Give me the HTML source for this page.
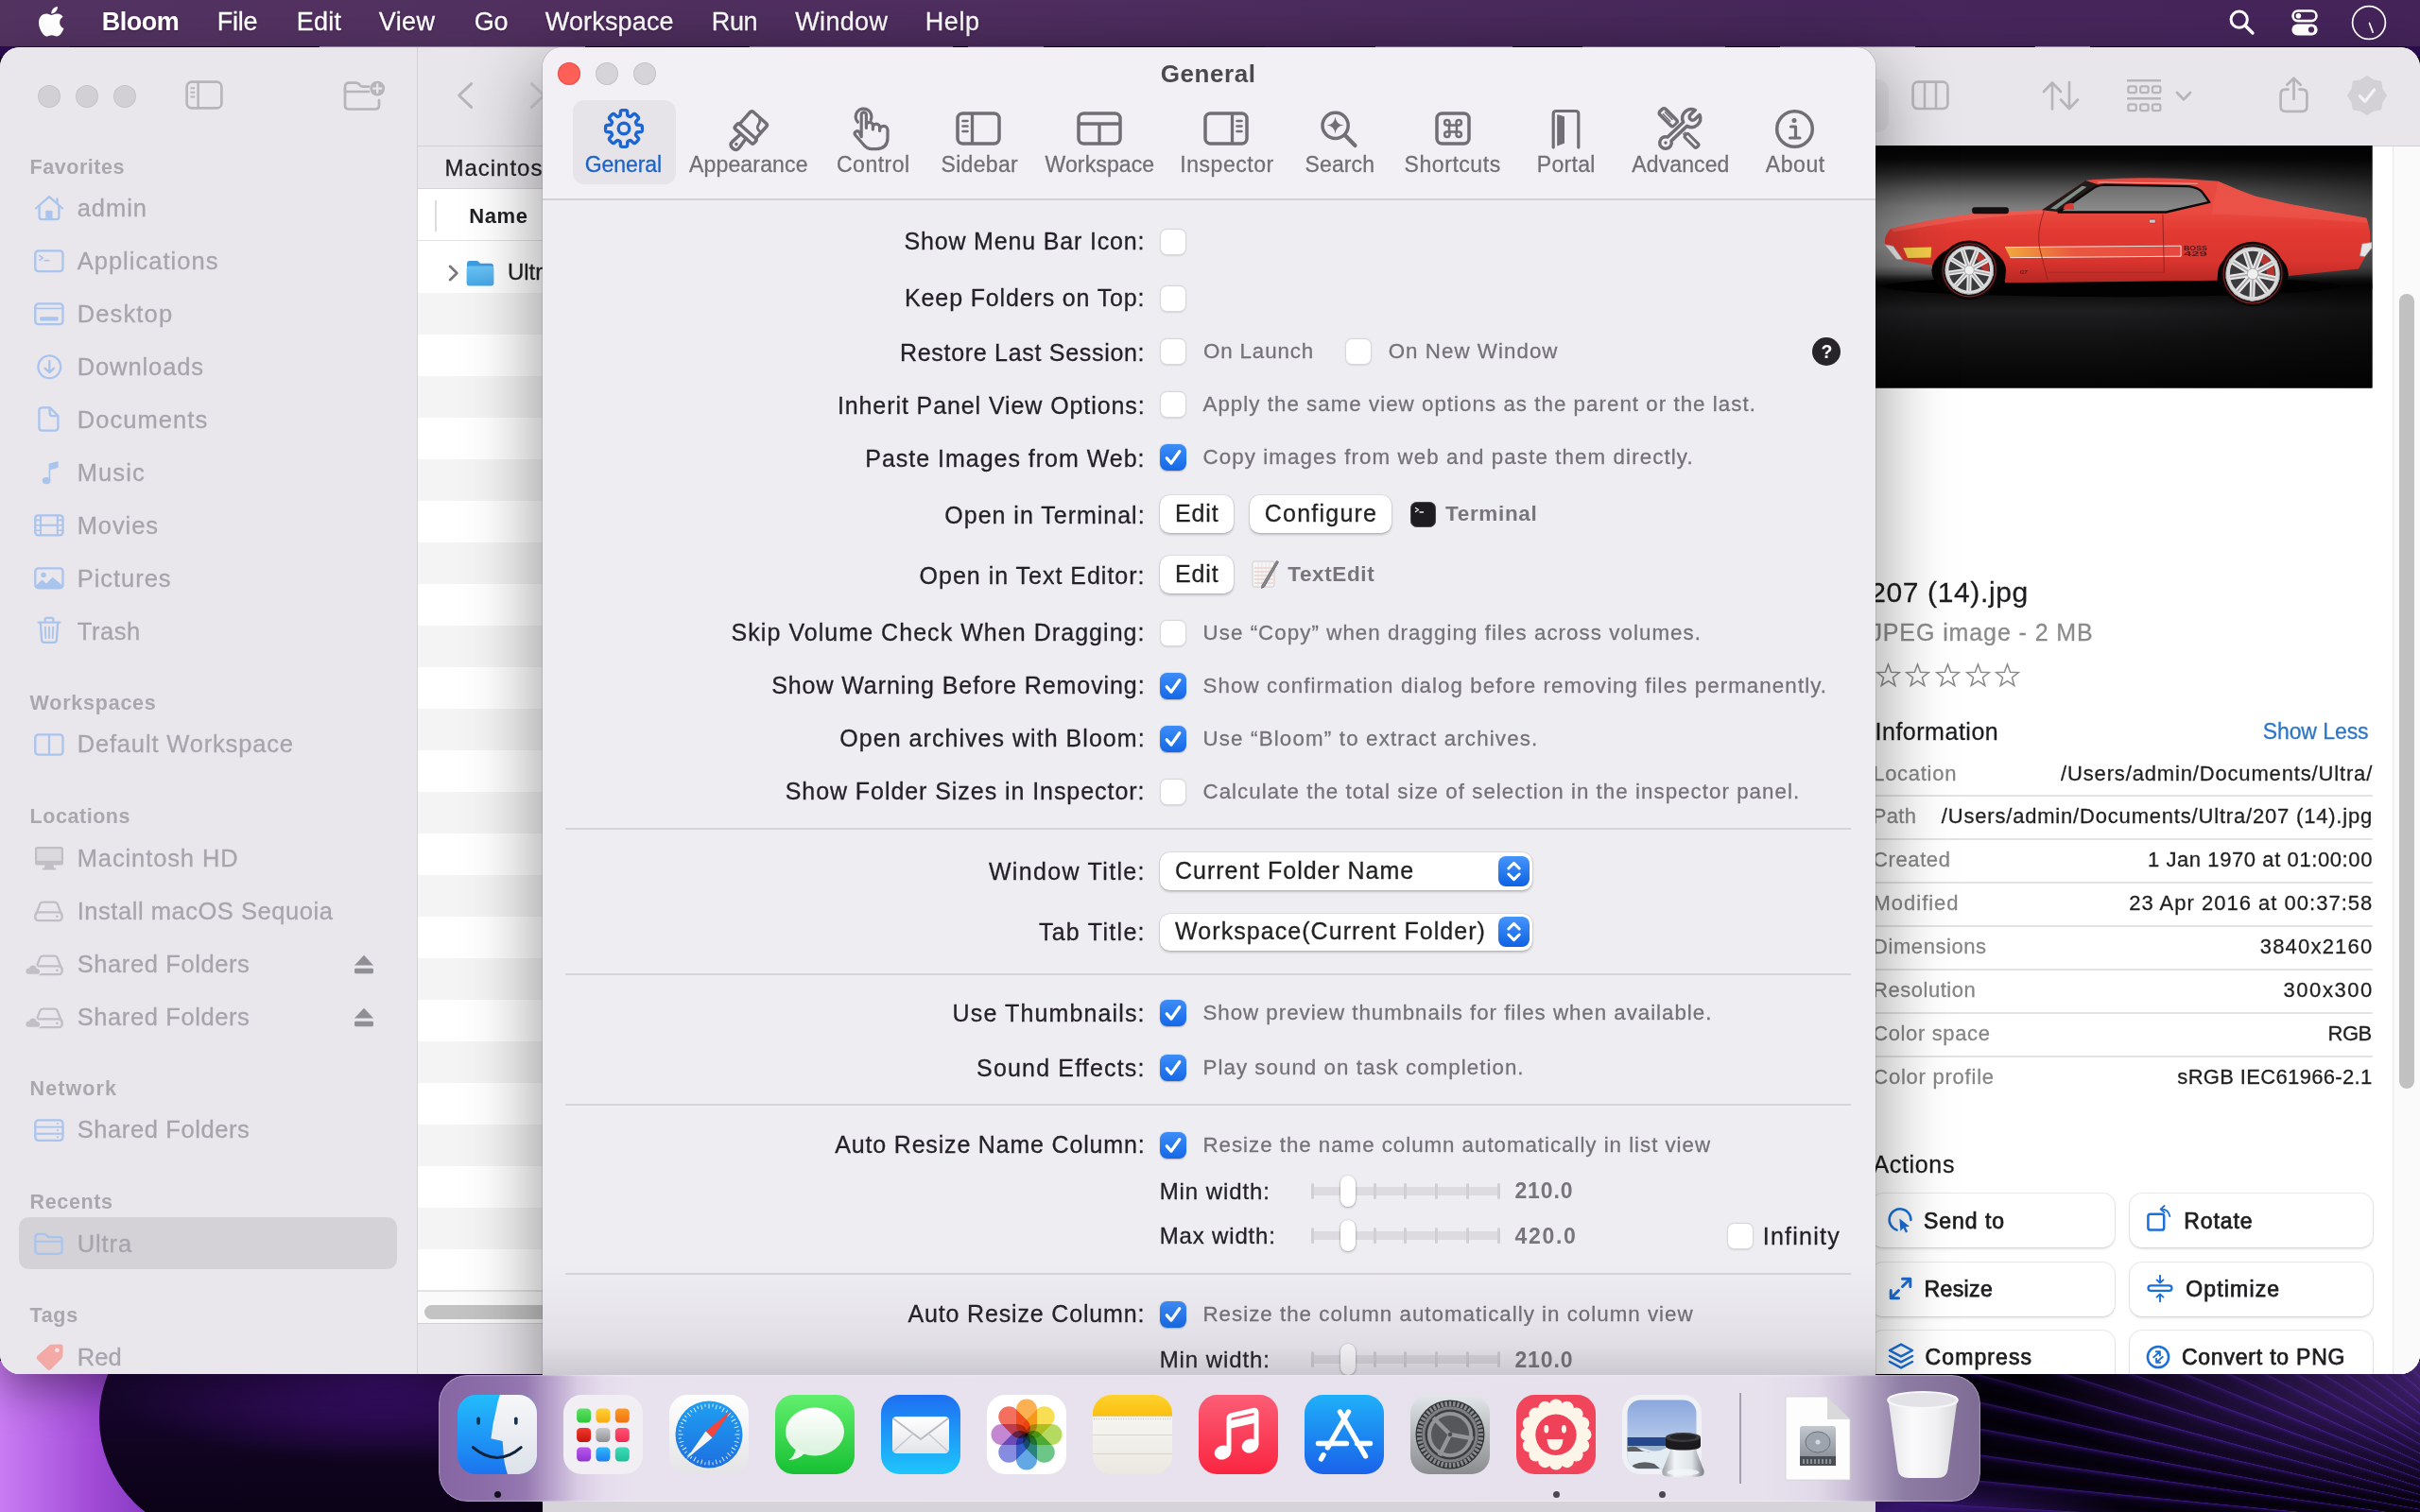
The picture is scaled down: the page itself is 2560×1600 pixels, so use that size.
<!DOCTYPE html>
<html lang="en"><head><meta charset="utf-8"><title>Bloom — General</title>
<style>
*{box-sizing:border-box;margin:0;padding:0}
html,body{width:2560px;height:1600px;overflow:hidden;background:#120722}
body{position:relative;font-family:"Liberation Sans",sans-serif;-webkit-font-smoothing:antialiased}
div,svg,span{position:absolute}
#menubar,#mainwin,#prefs,#dock{will-change:transform}
.t{white-space:pre;line-height:1;font-kerning:normal;-webkit-text-stroke:.28px currentColor}
svg{overflow:visible}
#wall{left:0;top:0;width:2560px;height:1600px;overflow:hidden}
#menubar{left:0;top:0;width:2560px;height:48.5px;background:linear-gradient(90deg,#52325f 0%,#4f2e60 40%,#47275b 75%,#432358 100%)}
#mainwin{left:0;top:50px;width:2560px;height:1404px;border-radius:21px;overflow:hidden;background:#fff;box-shadow:0 18px 45px rgba(0,0,0,.38)}
#prefs{left:574px;top:50px;width:1410px;height:1560px;border-radius:21px 21px 0 0;background:#eeedf2;box-shadow:0 0 0 1px rgba(0,0,0,.10),0 28px 75px 8px rgba(0,0,0,.37);overflow:hidden}
#dock{left:464px;top:1455px;width:1631px;height:134px;border-radius:30px;overflow:hidden}
.cb{width:28px;height:28px;border-radius:7.5px;background:#fff;border:1px solid #d9d6dc;box-shadow:0 .5px 1.5px rgba(0,0,0,.10)}
.cb.on{border:0;background:linear-gradient(#3d8df8,#1568e6);box-shadow:0 .5px 1.5px rgba(0,0,40,.25)}
.btn{background:#fff;border-radius:10.5px;box-shadow:0 0 0 .6px rgba(0,0,0,.10),0 1.2px 2.6px rgba(0,0,0,.20)}
.sep{height:1.6px;background:#d6d3d9}
.abtn{background:#fff;border-radius:13px;box-shadow:0 0 0 1px rgba(0,0,0,.075),0 1.5px 3px rgba(0,0,0,.10)}
.irow{height:1.6px;background:#e2e2e2}
</style></head>
<body>
<div id="wall"><div style="left:0px;top:40px;width:2560px;height:20px;background:linear-gradient(90deg,#2b0c52 0px,#2b0c52 74px,#0a0214 74px,#0a0214 338px,#a57dd3 338px,#a57dd3 619px,#0a0214 619px,#0a0214 793px,#a57dd3 793px,#a57dd3 1008px,#0a0214 1008px,#0a0214 1024px,#a57dd3 1024px,#a57dd3 1104px,#0a0214 1104px,#0a0214 1338px,#241040 1338px,#241040 1455px,#a57dd3 1455px,#a57dd3 1600px,#0a0214 1600px,#0a0214 1674px,#9a70c8 1674px,#9a70c8 1825px,#0a0214 1825px,#0a0214 1883px,#a57dd3 1883px,#a57dd3 2026px,#0a0214 2026px,#0a0214 2153px,#b08adb 2153px,#b08adb 2211px,#0a0214 2211px,#0a0214 2545px,#2b0c52 2545px,#2b0c52 2560px)"></div>
<div style="left:0px;top:1440px;width:600px;height:160px;background:linear-gradient(90deg,#c97cf3 0%,#b866e8 45px,#a04ad6 100px,#8a3cc4 150px)"></div>
<div style="left:105px;top:1376px;width:900px;height:250px;border-radius:125px 0 0 125px;background:radial-gradient(ellipse 300px 85px at 300px 86px,#3d1070 0%,#2d0b54 45%,rgba(22,6,42,0) 100%),linear-gradient(180deg,#1d0838 0%,#1a0733 35%,#100420 65%,#090214 100%)"></div>
<div style="left:1984px;top:1440px;width:576px;height:160px;background:repeating-conic-gradient(from 262deg at 756px 190px,#05010a 0deg,#09021a 1deg,#1c0840 1.36deg,#38187c 1.56deg,#09021a 1.64deg,#05010a 2.4deg)"></div>
<div style="left:1984px;top:1440px;width:576px;height:160px;background:radial-gradient(ellipse 420px 150px at 100% 0%,rgba(140,75,230,.55) 0%,rgba(120,60,210,.25) 55%,rgba(0,0,0,0) 100%),radial-gradient(ellipse 260px 40px at 0% 100%,rgba(75,30,150,.85) 0%,rgba(75,30,150,0) 100%),linear-gradient(90deg,rgba(0,0,0,.35) 0%,rgba(0,0,0,0) 50%)"></div></div>
<div id="menubar"><svg style="left:41px;top:7px;" width="26.5" height="31.5" viewBox="4 32 376 448"><path fill="#fff" d="M318.7 268.7c-.2-36.7 16.4-64.4 50-84.8-18.8-26.9-47.2-41.7-84.7-44.6-35.5-2.8-74.3 20.7-88.5 20.7-15 0-49.4-19.7-76.4-19.7C63.3 141.2 4 184.8 4 273.5q0 39.3 14.4 81.2c12.8 36.7 59 126.7 107.2 125.2 25.2-.6 43-17.9 75.8-17.9 31.8 0 48.3 17.9 76.4 17.9 48.6-.7 90.4-82.5 102.6-119.3-65.2-30.7-61.7-90-61.7-91.9zm-56.6-164.2c27.3-32.4 24.8-61.9 24-72.5-24.1 1.4-52 16.4-67.9 34.9-17.5 19.8-27.8 44.3-25.6 71.9 26.1 2 49.9-11.4 69.5-34.3z"/></svg>
<span class="t" style="left:107.8px;top:9.6px;font-size:27px;color:#fff;font-weight:700;-webkit-text-stroke:0;letter-spacing:-0.51px;text-shadow:0 1px 2.500px rgba(0,0,0,.35);">Bloom</span>
<span class="t" style="left:229.8px;top:9.6px;font-size:27px;color:#fff;letter-spacing:-0.27px;text-shadow:0 1px 2.500px rgba(0,0,0,.35);">File</span>
<span class="t" style="left:313.8px;top:9.6px;font-size:27px;color:#fff;letter-spacing:0.22px;text-shadow:0 1px 2.500px rgba(0,0,0,.35);">Edit</span>
<span class="t" style="left:400.8px;top:9.6px;font-size:27px;color:#fff;letter-spacing:0.35px;text-shadow:0 1px 2.500px rgba(0,0,0,.35);">View</span>
<span class="t" style="left:501.8px;top:9.6px;font-size:27px;color:#fff;letter-spacing:-0.30px;text-shadow:0 1px 2.500px rgba(0,0,0,.35);">Go</span>
<span class="t" style="left:576.8px;top:9.6px;font-size:27px;color:#fff;letter-spacing:0.15px;text-shadow:0 1px 2.500px rgba(0,0,0,.35);">Workspace</span>
<span class="t" style="left:752.8px;top:9.6px;font-size:27px;color:#fff;letter-spacing:-0.37px;text-shadow:0 1px 2.500px rgba(0,0,0,.35);">Run</span>
<span class="t" style="left:841.3px;top:9.6px;font-size:27px;color:#fff;letter-spacing:0.32px;text-shadow:0 1px 2.500px rgba(0,0,0,.35);">Window</span>
<span class="t" style="left:978.8px;top:9.6px;font-size:27px;color:#fff;letter-spacing:0.57px;text-shadow:0 1px 2.500px rgba(0,0,0,.35);">Help</span>
<svg style="left:2358px;top:10px;" width="27" height="28" viewBox="0 0 27 28"><circle cx="10.7" cy="10.7" r="8.6" fill="none" stroke="#fff" stroke-width="3"/><path d="M17 17l8 8" stroke="#fff" stroke-width="3.4" stroke-linecap="round"/></svg>
<svg style="left:2424px;top:10px;" width="28" height="28" viewBox="0 0 28 28"><rect x="1.5" y="1.5" width="25" height="10.6" rx="5.3" fill="none" stroke="#fff" stroke-width="2.6"/><circle cx="7.4" cy="6.8" r="2.8" fill="#fff"/><rect x=".4" y="15.4" width="27.2" height="12" rx="6" fill="#fff"/><circle cx="21" cy="21.4" r="3.1" fill="#48285c"/></svg>
<svg style="left:2487px;top:5px;" width="38" height="38" viewBox="0 0 38 38"><circle cx="19" cy="19" r="17.4" fill="none" stroke="#fff" stroke-width="1.7"/><path d="M19.5 19.5l3.6 9.6" stroke="#fff" stroke-width="1.7" stroke-linecap="round"/></svg></div>
<div id="mainwin"><div style="left:0px;top:-0.5px;width:441px;height:1405px;background:#e9e6ec"></div>
<div style="left:441px;top:-0.5px;width:1.2px;height:1405px;background:#d3d1d6"></div>
<div style="left:40px;top:39.6px;width:24px;height:24px;border-radius:50%;background:#d2d0d5;box-shadow:inset 0 0 0 1px rgba(0,0,0,.06)"></div>
<div style="left:80px;top:39.6px;width:24px;height:24px;border-radius:50%;background:#d2d0d5;box-shadow:inset 0 0 0 1px rgba(0,0,0,.06)"></div>
<div style="left:120px;top:39.6px;width:24px;height:24px;border-radius:50%;background:#d2d0d5;box-shadow:inset 0 0 0 1px rgba(0,0,0,.06)"></div>
<svg style="left:196px;top:35px;" width="40" height="31" viewBox="0 0 40 31"><rect x="1.6" y="1.6" width="36.8" height="27.8" rx="5.2" fill="none" stroke="#b7b5ba" stroke-width="2.6"/><path d="M13.6 2v27" stroke="#b7b5ba" stroke-width="2.4"/><path d="M5.5 8.2h4.6M5.5 12.8h4.6M5.5 17.4h4.6" stroke="#b7b5ba" stroke-width="2" /></svg>
<svg style="left:363px;top:34px;" width="46" height="34" viewBox="0 0 46 34"><path d="M2 9.5v17.8q0 4.2 4.2 4.2h27.6q4.2 0 4.2-4.2V22" fill="none" stroke="#b7b5ba" stroke-width="2.7" stroke-linecap="round"/><path d="M2 12.5V8q0-4.4 4.4-4.4h7.2q2 0 3.2 1.4l1.4 1.6q1 1 2.6 1H27" fill="none" stroke="#b7b5ba" stroke-width="2.7" stroke-linecap="round"/><path d="M2 13h26" stroke="#b7b5ba" stroke-width="2.4"/><circle cx="36.2" cy="9.6" r="7.9" fill="#b7b5ba"/><path d="M36.2 5.4v8.4M32 9.6h8.4" stroke="#e9e6ec" stroke-width="2.2" stroke-linecap="round"/></svg>
<span class="t" style="left:31.6px;top:116.9px;font-size:21.5px;color:#aaa8ae;font-weight:700;-webkit-text-stroke:0;letter-spacing:0.54px;">Favorites</span>
<span class="t" style="left:81.7px;top:157.9px;font-size:25.5px;color:#a7a5ac;letter-spacing:0.97px;">admin</span>
<span class="t" style="left:81.7px;top:213.9px;font-size:25.5px;color:#a7a5ac;letter-spacing:1.02px;">Applications</span>
<span class="t" style="left:81.7px;top:269.9px;font-size:25.5px;color:#a7a5ac;letter-spacing:1.14px;">Desktop</span>
<span class="t" style="left:81.7px;top:325.9px;font-size:25.5px;color:#a7a5ac;letter-spacing:0.90px;">Downloads</span>
<span class="t" style="left:81.7px;top:381.9px;font-size:25.5px;color:#a7a5ac;letter-spacing:1.06px;">Documents</span>
<span class="t" style="left:81.7px;top:437.9px;font-size:25.5px;color:#a7a5ac;letter-spacing:1.10px;">Music</span>
<span class="t" style="left:81.7px;top:493.9px;font-size:25.5px;color:#a7a5ac;letter-spacing:0.90px;">Movies</span>
<span class="t" style="left:81.7px;top:549.9px;font-size:25.5px;color:#a7a5ac;letter-spacing:0.97px;">Pictures</span>
<span class="t" style="left:81.7px;top:605.9px;font-size:25.5px;color:#a7a5ac;letter-spacing:0.57px;">Trash</span>
<span class="t" style="left:31.6px;top:684.0px;font-size:21.5px;color:#aaa8ae;font-weight:700;-webkit-text-stroke:0;letter-spacing:0.77px;">Workspaces</span>
<span class="t" style="left:81.7px;top:724.6px;font-size:25.5px;color:#a7a5ac;letter-spacing:0.83px;">Default Workspace</span>
<span class="t" style="left:31.6px;top:804.3px;font-size:21.5px;color:#aaa8ae;font-weight:700;-webkit-text-stroke:0;letter-spacing:0.54px;">Locations</span>
<span class="t" style="left:81.7px;top:846.3px;font-size:25.5px;color:#a7a5ac;letter-spacing:0.89px;">Macintosh HD</span>
<span class="t" style="left:81.7px;top:902.3px;font-size:25.5px;color:#a7a5ac;letter-spacing:0.54px;">Install macOS Sequoia</span>
<span class="t" style="left:81.7px;top:957.9px;font-size:25.5px;color:#a7a5ac;letter-spacing:0.60px;">Shared Folders</span>
<span class="t" style="left:81.7px;top:1013.9px;font-size:25.5px;color:#a7a5ac;letter-spacing:0.60px;">Shared Folders</span>
<span class="t" style="left:31.6px;top:1092.3px;font-size:21.5px;color:#aaa8ae;font-weight:700;-webkit-text-stroke:0;letter-spacing:1.09px;">Network</span>
<span class="t" style="left:81.7px;top:1133.3px;font-size:25.5px;color:#a7a5ac;letter-spacing:0.60px;">Shared Folders</span>
<span class="t" style="left:31.6px;top:1212.3px;font-size:21.5px;color:#aaa8ae;font-weight:700;-webkit-text-stroke:0;letter-spacing:0.64px;">Recents</span>
<div style="left:20px;top:1238.4px;width:400px;height:55px;border-radius:10.5px;background:#d4d2d7"></div>
<span class="t" style="left:81.7px;top:1253.5px;font-size:25.5px;color:#a7a5ac;letter-spacing:0.89px;">Ultra</span>
<span class="t" style="left:31.6px;top:1332.3px;font-size:21.5px;color:#aaa8ae;font-weight:700;-webkit-text-stroke:0;letter-spacing:0.64px;">Tags</span>
<span class="t" style="left:81.7px;top:1373.7px;font-size:25.5px;color:#a7a5ac;letter-spacing:0.07px;">Red</span>
<svg style="left:36px;top:156px;" width="32" height="28" viewBox="0 0 32 28"><path d="M2 14.5L16 2.2l14 12.3" fill="none" stroke="#a9c4ed" stroke-width="2.3" stroke-linejoin="round" stroke-linecap="round"/><path d="M24.5 4.5v5" fill="none" stroke="#a9c4ed" stroke-width="2.3" stroke-linejoin="round" stroke-linecap="round"/><path d="M5.6 12.5v11q0 2.6 2.6 2.6h15.6q2.6 0 2.6-2.6v-11" fill="none" stroke="#a9c4ed" stroke-width="2.3" stroke-linejoin="round" stroke-linecap="round"/><rect x="12.3" y="16.8" width="7.2" height="9.4" fill="#a9c4ed"/></svg>
<svg style="left:36px;top:214px;" width="32" height="25" viewBox="0 0 32 25"><rect x="1.3" y="1.3" width="29.2" height="21.8" rx="3.4" fill="none" stroke="#a9c4ed" stroke-width="2.3" stroke-linejoin="round" stroke-linecap="round"/><path d="M6 6.6l3.4 2.3L6 11.2M11.2 11.6h4.4" fill="none" stroke="#a9c4ed" stroke-width="1.7" stroke-linecap="round" stroke-linejoin="round"/></svg>
<svg style="left:36px;top:270px;" width="32" height="25" viewBox="0 0 32 25"><rect x="1.3" y="1.3" width="29.2" height="21.8" rx="3.4" fill="none" stroke="#a9c4ed" stroke-width="2.3" stroke-linejoin="round" stroke-linecap="round"/><path d="M1.6 6.4h28.6" stroke="#a9c4ed" stroke-width="1.6"/><rect x="6.2" y="15.2" width="19.4" height="4.2" rx="1.2" fill="#a9c4ed"/></svg>
<svg style="left:39px;top:325px;" width="27" height="27" viewBox="0 0 27 27"><circle cx="13.3" cy="13.3" r="11.9" fill="none" stroke="#a9c4ed" stroke-width="2.3" stroke-linejoin="round" stroke-linecap="round"/><path d="M13.3 6.8v12M8.6 14.6l4.7 4.6 4.7-4.6" fill="none" stroke="#a9c4ed" stroke-width="2.3" stroke-linejoin="round" stroke-linecap="round"/></svg>
<svg style="left:40px;top:380px;" width="24" height="27" viewBox="0 0 24 27"><path d="M1.4 4.4q0-3 3-3h8.4l8.6 8.6v12.6q0 3-3 3H4.4q-3 0-3-3z" fill="none" stroke="#a9c4ed" stroke-width="2.3" stroke-linejoin="round" stroke-linecap="round"/><path d="M12.6 1.6v6q0 2.6 2.6 2.6h6" fill="none" stroke="#a9c4ed" stroke-width="2.3" stroke-linejoin="round" stroke-linecap="round"/></svg>
<svg style="left:44px;top:437px;" width="19" height="27" viewBox="0 0 19 27"><path d="M8.4 21.2V4.2l8.4-2.2v5.2l-8.4 2.2" fill="#a9c4ed" stroke="#a9c4ed" stroke-width="1.6" stroke-linejoin="round"/><ellipse cx="5.1" cy="21.6" rx="4.4" ry="3.7" fill="#a9c4ed"/></svg>
<svg style="left:36px;top:494px;" width="32" height="24" viewBox="0 0 32 24"><rect x="1.3" y="1.3" width="29.2" height="21" rx="3" fill="none" stroke="#a9c4ed" stroke-width="2.3" stroke-linejoin="round" stroke-linecap="round"/><path d="M7 1.6v20.6M24.8 1.6v20.6M7 11.8h17.8" stroke="#a9c4ed" stroke-width="2"/><path d="M1.6 6.4h5.2M1.6 11.8h5.2M1.6 17.2h5.2M25 6.4h5.2M25 11.8h5.2M25 17.2h5.2" stroke="#a9c4ed" stroke-width="1.6"/></svg>
<svg style="left:36px;top:550px;" width="32" height="24" viewBox="0 0 32 24"><rect x="1.3" y="1.3" width="29.2" height="21" rx="3.4" fill="none" stroke="#a9c4ed" stroke-width="2.3" stroke-linejoin="round" stroke-linecap="round"/><circle cx="10" cy="8.4" r="2.7" fill="#a9c4ed"/><path d="M2 19.5l6.5-6 4.6 4 6.6-6.8 10.6 9v1.6q0 1.4-1.6 1.4H3.6q-1.6 0-1.6-1.4z" fill="#a9c4ed"/></svg>
<svg style="left:39px;top:602px;" width="26" height="30" viewBox="0 0 26 30"><path d="M1.6 6.6h22.8M8.6 6.2V3.6q0-1.8 1.8-1.8h5.2q1.8 0 1.8 1.8v2.6" fill="none" stroke="#a9c4ed" stroke-width="2.3" stroke-linejoin="round" stroke-linecap="round"/><path d="M3.8 7l1.3 18.2q.2 2.6 2.8 2.6h10.2q2.6 0 2.8-2.6L22.2 7" fill="none" stroke="#a9c4ed" stroke-width="2.3" stroke-linejoin="round" stroke-linecap="round"/><path d="M8.8 11.4l.5 11.6M13 11.4V23M17.2 11.4l-.5 11.6" stroke="#a9c4ed" stroke-width="1.8" stroke-linecap="round"/></svg>
<svg style="left:36px;top:726px;" width="32" height="25" viewBox="0 0 32 25"><rect x="1.3" y="1.3" width="29.2" height="21.4" rx="3.4" fill="none" stroke="#a9c4ed" stroke-width="2.3" stroke-linejoin="round" stroke-linecap="round"/><path d="M16 1.6v21" stroke="#a9c4ed" stroke-width="2.2"/></svg>
<svg style="left:36px;top:845px;" width="32" height="27" viewBox="0 0 32 27"><rect x="1" y="1" width="30" height="19.6" rx="2.6" fill="#c1bfc5"/><rect x="3.2" y="3.2" width="25.6" height="12.6" fill="#dbd9de"/><path d="M11.6 20h8.8l.8 3.4h2v2.2H8.800v-2.2h2z" fill="#c1bfc5"/></svg>
<svg style="left:36.4px;top:903px;" width="32" height="23" viewBox="0 0 32 23"><path d="M2 14.6L6.2 3.8q.9-2.2 3.2-2.2h12.200q2.300 0 3.200 2.200L29 14.600" fill="none" stroke="#c1bfc5" stroke-width="2.3" stroke-linejoin="round" stroke-linecap="round"/><rect x="1.3" y="12.4" width="28.4" height="8.800" rx="3.400" fill="none" stroke="#c1bfc5" stroke-width="2.3" stroke-linejoin="round" stroke-linecap="round"/><circle cx="24.4" cy="16.8" r="1.300" fill="#c1bfc5"/></svg>
<svg style="left:36.4px;top:959.6px;" width="32" height="23" viewBox="0 0 32 23"><path d="M2 14.6L6.2 3.8q.9-2.2 3.2-2.2h12.200q2.300 0 3.200 2.200L29 14.600" fill="none" stroke="#c1bfc5" stroke-width="2.3" stroke-linejoin="round" stroke-linecap="round"/><rect x="1.3" y="12.4" width="28.4" height="8.800" rx="3.400" fill="none" stroke="#c1bfc5" stroke-width="2.3" stroke-linejoin="round" stroke-linecap="round"/><circle cx="24.4" cy="16.8" r="1.300" fill="#c1bfc5"/><path d="M-6.6 21.6h9.6a3.600 3.600 0 0 0 .4-7.200a4.600 4.600 0 0 0-8.800-.6a4 4 0 0 0-1.200 7.800z" fill="#c1bfc5" stroke="#e9e6ec" stroke-width="1.6"/></svg>
<svg style="left:36.4px;top:1015.6px;" width="32" height="23" viewBox="0 0 32 23"><path d="M2 14.6L6.2 3.8q.9-2.2 3.2-2.2h12.200q2.300 0 3.200 2.200L29 14.600" fill="none" stroke="#c1bfc5" stroke-width="2.3" stroke-linejoin="round" stroke-linecap="round"/><rect x="1.3" y="12.4" width="28.4" height="8.800" rx="3.400" fill="none" stroke="#c1bfc5" stroke-width="2.3" stroke-linejoin="round" stroke-linecap="round"/><circle cx="24.4" cy="16.8" r="1.300" fill="#c1bfc5"/><path d="M-6.6 21.6h9.6a3.600 3.600 0 0 0 .4-7.200a4.600 4.600 0 0 0-8.800-.6a4 4 0 0 0-1.200 7.800z" fill="#c1bfc5" stroke="#e9e6ec" stroke-width="1.6"/></svg>
<svg style="left:36px;top:1134px;" width="32" height="25" viewBox="0 0 32 25"><rect x="1.3" y="1.3" width="29.2" height="21.6" rx="3.6" fill="none" stroke="#a9c4ed" stroke-width="2.3" stroke-linejoin="round" stroke-linecap="round"/><path d="M1.6 8.600h28.600M1.600 15.700h28.600" stroke="#a9c4ed" stroke-width="1.900"/><circle cx="25" cy="5" r="1.100" fill="#a9c4ed"/><circle cx="25" cy="12.1" r="1.100" fill="#a9c4ed"/><circle cx="25" cy="19.300" r="1.100" fill="#a9c4ed"/></svg>
<svg style="left:36px;top:1254px;" width="32" height="25" viewBox="0 0 32 25"><path d="M1.4 19.600V5q0-3.200 3.200-3.200h6q1.600 0 2.600 1.200l1.200 1.400q.8.800 2.200.800h9.800q3.200 0 3.200 3.200v11.200q0 3.200-3.200 3.200H4.600q-3.200 0-3.200-3.200z" fill="none" stroke="#a9c4ed" stroke-width="2.3" stroke-linejoin="round" stroke-linecap="round"/><path d="M1.600 9.800h28" stroke="#a9c4ed" stroke-width="2"/></svg>
<svg style="left:37px;top:1371px;" width="32" height="30" viewBox="0 0 32 30"><path d="M17.600 1.800l9.200-.2q2.800-.1 2.800 2.800l-.2 9.200q0 1.800-1.400 3.200L16.800 28q-2 2-4 0L2.600 17.800q-2-2 0-4L14.400 3.200q1.400-1.400 3.200-1.400z" fill="#f3aaa6"/><circle cx="23.400" cy="7.800" r="2.300" fill="#f9e4e6"/></svg>
<svg style="left:373.6px;top:960px;" width="22" height="21" viewBox="0 0 22 21"><path d="M11 .8L21 11.600H1z" fill="#918f96"/><rect x="1" y="14.800" width="20" height="5.400" rx="1.400" fill="#918f96"/></svg>
<svg style="left:373.6px;top:1016px;" width="22" height="21" viewBox="0 0 22 21"><path d="M11 .8L21 11.600H1z" fill="#918f96"/><rect x="1" y="14.800" width="20" height="5.400" rx="1.400" fill="#918f96"/></svg>
<div style="left:442px;top:-0.5px;width:2118px;height:104.5px;background:#e9e6eb"></div>
<div style="left:442px;top:103.6px;width:2118px;height:1.4px;background:#d2d0d4"></div>
<svg style="left:483px;top:37px;" width="18" height="28" viewBox="0 0 18 28"><path d="M15.6 1.600L2.600 14l13 12.400" fill="none" stroke="#b7b5ba" stroke-width="3" stroke-linecap="round" stroke-linejoin="round"/></svg>
<svg style="left:560px;top:37px;" width="18" height="28" viewBox="0 0 18 28"><path d="M2.400 1.600L15.400 14l-13 12.400" fill="none" stroke="#cfcdd2" stroke-width="3" stroke-linecap="round" stroke-linejoin="round"/></svg>
<div style="left:1940px;top:34px;width:58px;height:56px;border-radius:12px;background:#e0dde3"></div>
<svg style="left:2022px;top:35px;" width="40" height="32" viewBox="0 0 40 32"><rect x="1.600" y="1.600" width="36.800" height="28.400" rx="5.200" fill="none" stroke="#b7b5ba" stroke-width="2.700"/><path d="M14 2v28M26 2v28" stroke="#b7b5ba" stroke-width="2.500"/></svg>
<svg style="left:2160px;top:35px;" width="40" height="33" viewBox="0 0 40 33"><path d="M11 30.500V3M2 12l9-9.500L20 12M29 2v27.500M20 20.500l9 9.500 9-9.500" fill="none" stroke="#b7b5ba" stroke-width="2.700" stroke-linecap="round" stroke-linejoin="round"/></svg>
<svg style="left:2250px;top:34px;" width="36" height="36" viewBox="0 0 36 36"><path d="M0 1.300h36M0 20.200h36" stroke="#b7b5ba" stroke-width="2.400"/><rect x="1.4" y="7.4" width="8.400" height="6.800" rx="1.600" fill="none" stroke="#b7b5ba" stroke-width="2.300"/><rect x="14.2" y="7.4" width="8.400" height="6.800" rx="1.600" fill="none" stroke="#b7b5ba" stroke-width="2.300"/><rect x="27" y="7.4" width="8.400" height="6.800" rx="1.600" fill="none" stroke="#b7b5ba" stroke-width="2.300"/><rect x="1.4" y="26.4" width="8.400" height="6.800" rx="1.600" fill="none" stroke="#b7b5ba" stroke-width="2.300"/><rect x="14.2" y="26.4" width="8.400" height="6.800" rx="1.600" fill="none" stroke="#b7b5ba" stroke-width="2.300"/><rect x="27" y="26.4" width="8.400" height="6.800" rx="1.600" fill="none" stroke="#b7b5ba" stroke-width="2.300"/></svg>
<svg style="left:2301px;top:46px;" width="18" height="12" viewBox="0 0 18 12"><path d="M2 2l7 7.200L16 2" fill="none" stroke="#b7b5ba" stroke-width="2.800" stroke-linecap="round" stroke-linejoin="round"/></svg>
<svg style="left:2411px;top:31px;" width="31" height="39" viewBox="0 0 31 39"><path d="M9.600 13.600H6.600q-5 0-5 5v13.200q0 5 5 5h17.800q5 0 5-5V18.600q0-5-5-5h-3" fill="none" stroke="#b7b5ba" stroke-width="2.700" stroke-linecap="round"/><path d="M15.500 24V2.400M8.400 8.800l7.100-7 7.100 7" fill="none" stroke="#b7b5ba" stroke-width="2.700" stroke-linecap="round" stroke-linejoin="round"/></svg>
<svg style="left:2484px;top:31px;" width="40" height="40" viewBox="0 0 40 40"><polygon points="20.0,0.4 26.3,4.8 33.9,6.1 35.2,13.7 39.6,20.0 35.2,26.3 33.9,33.9 26.3,35.2 20.0,39.6 13.7,35.2 6.1,33.9 4.8,26.3 0.4,20.0 4.8,13.7 6.1,6.1 13.7,4.8" fill="#d3d1d6" stroke="#d3d1d6" stroke-width="3" stroke-linejoin="round"/><path d="M12.400 20.600l5.400 5.800 9.800-12.400" fill="none" stroke="#f4f2f6" stroke-width="3.200" stroke-linecap="round" stroke-linejoin="round"/></svg>
<div style="left:442px;top:105px;width:1542px;height:44px;background:#e9e7eb"></div>
<div style="left:442px;top:148.6px;width:1542px;height:1.4px;background:#d6d5d7"></div>
<span class="t" style="left:470.4px;top:115.9px;font-size:24px;color:#232225;letter-spacing:1.00px;">Macintosh HD</span>
<div style="left:442px;top:150px;width:1542px;height:54px;background:#fff"></div>
<div style="left:442px;top:203.5px;width:1542px;height:1.3px;background:#e3e3e4"></div>
<div style="left:460.3px;top:162px;width:1.3px;height:33px;background:#dcdcdc"></div>
<span class="t" style="left:496.3px;top:167.6px;font-size:22px;color:#222124;font-weight:700;-webkit-text-stroke:0;letter-spacing:0.56px;">Name</span>
<div style="left:442px;top:205px;width:1542px;height:1111px;background:repeating-linear-gradient(180deg,#f4f4f5 0,#f4f4f5 44px,#fff 44px,#fff 88px);background-position:0 55px"></div>
<div style="left:442px;top:205px;width:1542px;height:55px;background:#fff"></div>
<svg style="left:474px;top:230px;" width="12" height="18" viewBox="0 0 12 18"><path d="M2 1.800L9.400 9 2 16.200" fill="none" stroke="#77757a" stroke-width="2.600" stroke-linecap="round" stroke-linejoin="round"/></svg>
<svg style="left:493px;top:224.5px;" width="30" height="28" viewBox="0 0 30 28"><defs><linearGradient id="fg" x1="0" y1="0" x2="0" y2="1"><stop offset="0" stop-color="#6cc4f5"/><stop offset="1" stop-color="#45a6e6"/></linearGradient></defs><path d="M1 4q0-3 3-3h6.800q1.600 0 2.600 1.100L15 3.800h11q3 0 3 3V10H1z" fill="#3d9ddf"/><rect x=".6" y="6.400" width="28.800" height="21" rx="3" fill="url(#fg)"/></svg>
<span class="t" style="left:536.9px;top:226.1px;font-size:24px;color:#232225;">Ultra</span>
<div style="left:442px;top:1316px;width:1542px;height:35px;background:#fafafa"></div>
<div style="left:442px;top:1315.4px;width:1542px;height:1.2px;background:#e4e4e4"></div>
<div style="left:448.5px;top:1331px;width:700px;height:15px;border-radius:8px;background:#c3c3c3"></div>
<div style="left:442px;top:1350.4px;width:1542px;height:54px;background:#e9e6eb"></div>
<div style="left:442px;top:1350px;width:1542px;height:1.3px;background:#d2d0d4"></div>
<div style="left:1960px;top:105px;width:600px;height:1300px;background:#fff"></div>
<div style="left:2531px;top:105px;width:29px;height:1300px;background:#fafafa"></div>
<div style="left:2530.6px;top:105px;width:1.3px;height:1300px;background:#e7e7e7"></div>
<div style="left:2538px;top:260.5px;width:16px;height:841px;border-radius:8px;background:#c1c1c1"></div>
<span class="t" style="left:1978.2px;top:561.8px;font-size:30px;color:#1d1d1f;letter-spacing:0.63px;">207 (14).jpg</span>
<span class="t" style="left:1978.4px;top:607.0px;font-size:25px;color:#8b8b8b;letter-spacing:0.90px;">JPEG image - 2 MB</span>
<svg style="left:1984.5px;top:651.5px;" width="25" height="25" viewBox="0 0 25 25"><polygon points="12.50,1.00 15.56,9.19 24.29,9.57 17.45,15.01 19.79,23.43 12.50,18.60 5.21,23.43 7.55,15.01 0.71,9.57 9.44,9.19" fill="none" stroke="#8b8b8b" stroke-width="1.500" stroke-linejoin="miter"/></svg>
<svg style="left:2016.2px;top:651.5px;" width="25" height="25" viewBox="0 0 25 25"><polygon points="12.50,1.00 15.56,9.19 24.29,9.57 17.45,15.01 19.79,23.43 12.50,18.60 5.21,23.43 7.55,15.01 0.71,9.57 9.44,9.19" fill="none" stroke="#8b8b8b" stroke-width="1.500" stroke-linejoin="miter"/></svg>
<svg style="left:2047.9px;top:651.5px;" width="25" height="25" viewBox="0 0 25 25"><polygon points="12.50,1.00 15.56,9.19 24.29,9.57 17.45,15.01 19.79,23.43 12.50,18.60 5.21,23.43 7.55,15.01 0.71,9.57 9.44,9.19" fill="none" stroke="#8b8b8b" stroke-width="1.500" stroke-linejoin="miter"/></svg>
<svg style="left:2079.6px;top:651.5px;" width="25" height="25" viewBox="0 0 25 25"><polygon points="12.50,1.00 15.56,9.19 24.29,9.57 17.45,15.01 19.79,23.43 12.50,18.60 5.21,23.43 7.55,15.01 0.71,9.57 9.44,9.19" fill="none" stroke="#8b8b8b" stroke-width="1.500" stroke-linejoin="miter"/></svg>
<svg style="left:2111.3px;top:651.5px;" width="25" height="25" viewBox="0 0 25 25"><polygon points="12.50,1.00 15.56,9.19 24.29,9.57 17.45,15.01 19.79,23.43 12.50,18.60 5.21,23.43 7.55,15.01 0.71,9.57 9.44,9.19" fill="none" stroke="#8b8b8b" stroke-width="1.500" stroke-linejoin="miter"/></svg>
<span class="t" style="left:1983.5px;top:711.5px;font-size:25px;color:#1d1d1f;letter-spacing:0.52px;">Information</span>
<span class="t" style="left:2393.7px;top:713.0px;font-size:23px;color:#2b76c9;letter-spacing:-0.08px;">Show Less</span>
<span class="t" style="left:1981.2px;top:757.7px;font-size:22px;color:#868686;letter-spacing:0.72px;">Location</span>
<span class="t" style="left:2180.1px;top:757.7px;font-size:22px;color:#1f1f1f;letter-spacing:0.84px;">/Users/admin/Documents/Ultra/</span>
<div style="left:1975px;top:791.2px;width:535px;height:1.6px;background:#e3e3e3"></div>
<span class="t" style="left:1980.8px;top:803.4px;font-size:22px;color:#868686;letter-spacing:0.30px;">Path</span>
<span class="t" style="left:2053.8px;top:803.4px;font-size:22px;color:#1f1f1f;letter-spacing:0.81px;">/Users/admin/Documents/Ultra/207 (14).jpg</span>
<div style="left:1975px;top:837.2px;width:535px;height:1.6px;background:#e3e3e3"></div>
<span class="t" style="left:1981.1px;top:849.0px;font-size:22px;color:#868686;letter-spacing:0.59px;">Created</span>
<span class="t" style="left:2271.9px;top:849.0px;font-size:22px;color:#1f1f1f;letter-spacing:0.59px;">1 Jan 1970 at 01:00:00</span>
<div style="left:1975px;top:883.2px;width:535px;height:1.6px;background:#e3e3e3"></div>
<span class="t" style="left:1981.5px;top:895.1px;font-size:22px;color:#868686;letter-spacing:0.99px;">Modified</span>
<span class="t" style="left:2252.2px;top:895.1px;font-size:22px;color:#1f1f1f;letter-spacing:1.01px;">23 Apr 2016 at 00:37:58</span>
<div style="left:1975px;top:929.2px;width:535px;height:1.6px;background:#e3e3e3"></div>
<span class="t" style="left:1981.1px;top:941.1px;font-size:22px;color:#868686;letter-spacing:0.55px;">Dimensions</span>
<span class="t" style="left:2390.7px;top:941.1px;font-size:22px;color:#1f1f1f;letter-spacing:1.21px;">3840x2160</span>
<div style="left:1975px;top:975.2px;width:535px;height:1.6px;background:#e3e3e3"></div>
<span class="t" style="left:1981.0px;top:987.0px;font-size:22px;color:#868686;letter-spacing:0.53px;">Resolution</span>
<span class="t" style="left:2415.5px;top:987.0px;font-size:22px;color:#1f1f1f;letter-spacing:1.57px;">300x300</span>
<div style="left:1975px;top:1021.2px;width:535px;height:1.6px;background:#e3e3e3"></div>
<span class="t" style="left:1981.2px;top:1032.9px;font-size:22px;color:#868686;letter-spacing:0.64px;">Color space</span>
<span class="t" style="left:2462.6px;top:1032.9px;font-size:22px;color:#1f1f1f;letter-spacing:-0.50px;">RGB</span>
<div style="left:1975px;top:1067.2px;width:535px;height:1.6px;background:#e3e3e3"></div>
<span class="t" style="left:1981.3px;top:1078.8px;font-size:22px;color:#868686;letter-spacing:0.76px;">Color profile</span>
<span class="t" style="left:2303.3px;top:1078.8px;font-size:22px;color:#1f1f1f;letter-spacing:0.34px;">sRGB IEC61966-2.1</span>
<span class="t" style="left:1981.4px;top:1170.3px;font-size:25px;color:#1d1d1f;letter-spacing:0.68px;">Actions</span>
<div class="abtn" style="left:1979px;top:1213.3px;width:257.5px;height:57px;"></div>
<div class="abtn" style="left:2252.5px;top:1213.3px;width:257.2px;height:57px;"></div>
<div class="abtn" style="left:1979px;top:1285.8px;width:257.5px;height:57px;"></div>
<div class="abtn" style="left:2252.5px;top:1285.8px;width:257.2px;height:57px;"></div>
<div class="abtn" style="left:1979px;top:1358px;width:257.5px;height:57px;"></div>
<div class="abtn" style="left:2252.5px;top:1358px;width:257.2px;height:57px;"></div>
<span class="t" style="left:2035.0px;top:1230.8px;font-size:23px;color:#1d1d1f;letter-spacing:0.97px;-webkit-text-stroke:.75px currentColor;">Send to</span>
<span class="t" style="left:2310.3px;top:1230.8px;font-size:23px;color:#1d1d1f;letter-spacing:0.92px;-webkit-text-stroke:.75px currentColor;">Rotate</span>
<span class="t" style="left:2035.6px;top:1303.2px;font-size:23px;color:#1d1d1f;letter-spacing:0.36px;-webkit-text-stroke:.75px currentColor;">Resize</span>
<span class="t" style="left:2312.3px;top:1303.2px;font-size:23px;color:#1d1d1f;letter-spacing:1.15px;-webkit-text-stroke:.75px currentColor;">Optimize</span>
<span class="t" style="left:2036.6px;top:1374.7px;font-size:23px;color:#1d1d1f;letter-spacing:1.08px;-webkit-text-stroke:.75px currentColor;">Compress</span>
<span class="t" style="left:2307.9px;top:1374.7px;font-size:23px;color:#1d1d1f;letter-spacing:0.79px;-webkit-text-stroke:.75px currentColor;">Convert to PNG</span>
<svg style="left:1997px;top:1228px;" width="27" height="27" viewBox="0 0 27 27"><path d="M9.600 23.600A11.400 11.400 0 1 1 24.400 13" fill="none" stroke="#1a6fd8" stroke-width="2.500" stroke-linecap="round" stroke-linejoin="round"/><path d="M12.400 11.600l1 13.200 3-3.400 2.600 5 2.200-1.200-2.600-4.800 4.400-.6z" fill="#1a6fd8"/></svg>
<svg style="left:2271px;top:1225px;" width="27" height="29" viewBox="0 0 27 29"><rect x="1.400" y="9.800" width="16.800" height="16.800" rx="2.400" fill="none" stroke="#1a6fd8" stroke-width="2.500" stroke-linecap="round" stroke-linejoin="round"/><path d="M15.600 4.600q7.400 0 8.800 7.600" fill="none" stroke="#1a6fd8" stroke-width="1.800" stroke-linecap="round"/><path d="M18.600 1l-4 3.600 4 3.600" fill="none" stroke="#1a6fd8" stroke-width="1.800" stroke-linecap="round" stroke-linejoin="round"/></svg>
<svg style="left:1998px;top:1301px;" width="25" height="25" viewBox="0 0 25 25"><path d="M14.500 2.200h8.300v8.300M22.300 2.700l-7.800 7.800M10.500 22.800H2.200v-8.300M2.700 22.300l7.800-7.800" fill="none" stroke="#1a6fd8" stroke-width="3" stroke-linecap="round" stroke-linejoin="round"/></svg>
<svg style="left:2271px;top:1297.8px;" width="28" height="30" viewBox="0 0 28 30"><rect x="1.500" y="12.300" width="25" height="5.600" rx="2.800" fill="none" stroke="#1a6fd8" stroke-width="2.200"/><path d="M14 1.800v7.600M10.600 6.400l3.400 3.200 3.400-3.200M14 29.200v-7.600M10.600 24.600l3.400-3.200 3.400 3.200" fill="none" stroke="#1a6fd8" stroke-width="1.900" stroke-linecap="round" stroke-linejoin="round"/></svg>
<svg style="left:1997px;top:1371px;" width="28" height="29" viewBox="0 0 28 29"><path d="M14 1.600L26 8 14 14.400 2 8z" fill="none" stroke="#1a6fd8" stroke-width="2.500" stroke-linecap="round" stroke-linejoin="round"/><path d="M2 14l12 6.400L26 14M2 20l12 6.400L26 20" fill="none" stroke="#1a6fd8" stroke-width="2.500" stroke-linecap="round" stroke-linejoin="round"/></svg>
<svg style="left:2270px;top:1372.8px;" width="26" height="26" viewBox="0 0 26 26"><circle cx="13" cy="13" r="11.100" fill="none" stroke="#1a6fd8" stroke-width="2.500" stroke-linecap="round" stroke-linejoin="round"/><path d="M8.200 13.200l6.400-5.600M10.800 7.300h4.100v4.100M17.800 12.800l-6.400 5.600M15.200 18.700h-4.100v-4.100" fill="none" stroke="#1a6fd8" stroke-width="1.900" stroke-linecap="round" stroke-linejoin="round"/></svg>
<svg style="left:1984.3px;top:104.3px;overflow:hidden" width="525.4" height="256.5" viewBox="18 18 2192 1070">
<defs>
<linearGradient id="cglow" x1="0" y1="18" x2="0" y2="650" gradientUnits="userSpaceOnUse"><stop offset="0" stop-color="#020202"/><stop offset=".1" stop-color="#090909"/><stop offset=".2" stop-color="#292929"/><stop offset=".31" stop-color="#575757"/><stop offset=".43" stop-color="#7d7d7d"/><stop offset=".56" stop-color="#8f8f8f"/><stop offset=".7" stop-color="#929292"/><stop offset=".84" stop-color="#7a7a7a"/><stop offset=".94" stop-color="#2c2c2c"/><stop offset="1" stop-color="#050505"/></linearGradient>
<linearGradient id="cfloor" x1="0" y1="0" x2="0" y2="1"><stop offset="0" stop-color="#050505" stop-opacity="0"/><stop offset=".53" stop-color="#050505" stop-opacity="0"/><stop offset=".58" stop-color="#060606"/><stop offset=".68" stop-color="#1f1f21"/><stop offset=".8" stop-color="#121213"/><stop offset="1" stop-color="#040404"/></linearGradient>
<linearGradient id="cedge" x1="0" y1="0" x2="1" y2="0"><stop offset="0" stop-color="#000" stop-opacity="0"/><stop offset=".45" stop-color="#000" stop-opacity="0"/><stop offset=".8" stop-color="#000" stop-opacity=".3"/><stop offset="1" stop-color="#000" stop-opacity=".48"/></linearGradient>
<linearGradient id="cbody" x1="0" y1="170" x2="0" y2="620" gradientUnits="userSpaceOnUse"><stop offset="0" stop-color="#e4483f"/><stop offset=".3" stop-color="#ea4a40"/><stop offset=".5" stop-color="#e23a32"/><stop offset=".8" stop-color="#d9342e"/><stop offset="1" stop-color="#b92823"/></linearGradient>
<linearGradient id="cstripe" x1="140" y1="0" x2="1365" y2="0" gradientUnits="userSpaceOnUse"><stop offset="0" stop-color="#f4d04a"/><stop offset=".12" stop-color="#f2c945"/><stop offset=".38" stop-color="#f1a53c"/><stop offset=".62" stop-color="#e9573f"/><stop offset="1" stop-color="#e8473f"/></linearGradient>
<linearGradient id="cwin" x1="0" y1="190" x2="0" y2="315" gradientUnits="userSpaceOnUse"><stop offset="0" stop-color="#6d6d6d"/><stop offset="1" stop-color="#8e8e8e"/></linearGradient>
</defs>
<rect x="18" y="18" width="2192" height="1070" fill="#030303"/>
<rect x="18" y="18" width="2192" height="632" fill="url(#cglow)"/>
<rect x="18" y="18" width="2192" height="1070" fill="url(#cfloor)"/>
<rect x="18" y="18" width="2192" height="1070" fill="url(#cedge)"/>
<ellipse cx="1060" cy="640" rx="1010" ry="46" fill="#020202"/>
<path d="M130 522 L60 458 Q52 420 85 385 Q250 345 450 318 Q600 305 752 303 L945 172 Q1200 148 1530 175 Q1620 215 1700 243 Q1850 280 2000 305 L2185 338 Q2206 400 2200 440 L2196 478 L2150 562 L1841 594 A157 116 0 1 0 1527 604 L1527 614 L590 624 L588 612 A165 114 0 1 0 269 548 Z" fill="url(#cbody)"/>
<path d="M85 385 Q250 345 450 318 Q600 305 752 303 L760 318 Q500 325 100 400Z" fill="#f0675c" opacity=".55"/>
<path d="M1530 175 Q1620 215 1700 243 Q1850 280 2000 305 L2185 338 L2190 360 Q1800 330 1500 320Z" fill="#ee5a50" opacity=".5"/>
<path d="M752 303 L945 172 L1000 190 L838 312Z" fill="#231a1a"/>
<path d="M790 296 L930 196 L950 200 L815 300Z" fill="#9fb5ae" opacity=".75"/>
<path d="M985 203 Q1000 192 1030 191 L1400 198 Q1445 204 1462 226 L1492 268 L1300 312 L826 312Z" fill="url(#cwin)" stroke="#0d0a0a" stroke-width="10" stroke-linejoin="round"/>
<path d="M1000 180 L1440 186" stroke="#f2d5d2" stroke-width="4" opacity=".7"/>
<path d="M845 298 q10 -28 45 -26 l5 30z" fill="#d93a33"/>
<rect x="444" y="290" width="162" height="29" rx="12" fill="#141012"/>
<path d="M140 470 L265 466 L262 512 L160 514Z" fill="#f3cd49"/>
<path d="M590 468 L1365 462 L1365 506 L612 512Z" fill="url(#cstripe)"/>
<path d="M590 467 L1366 461 L1366 507 L612 513" fill="none" stroke="#f6e9e4" stroke-width="4"/>
<path d="M762 306 Q728 400 742 470 L778 612" fill="none" stroke="#8e1f1c" stroke-width="3.500"/>
<path d="M1286 322 L1292 578" fill="none" stroke="#8e1f1c" stroke-width="3.500"/>
<path d="M780 578 L1292 578" fill="none" stroke="#a32622" stroke-width="3"/>
<text x="1378" y="480" font-family="Liberation Sans,sans-serif" font-weight="700" font-size="29" fill="#5b1616" textLength="104" lengthAdjust="spacingAndGlyphs">BOSS</text>
<text x="1378" y="507" font-family="Liberation Sans,sans-serif" font-weight="700" font-size="29" fill="#5b1616" textLength="104" lengthAdjust="spacingAndGlyphs">429</text>
<text x="655" y="585" font-family="Liberation Sans,sans-serif" font-weight="700" font-style="italic" font-size="24" fill="#6a1a18">GT</text>
<path d="M58 455 L96 462 L138 522 L112 520Z" fill="#e9e9ea" stroke="#a8a8aa" stroke-width="3"/>
<path d="M2166 452 L2208 446 L2208 470 L2178 508 L2156 505Z" fill="#e4e4e6" stroke="#9d9d9f" stroke-width="3"/>
<rect x="1226" y="344" width="28" height="16" rx="3" fill="#c9c9cb" stroke="#7a2020" stroke-width="2"/>
<ellipse cx="430" cy="570" rx="164" ry="113" fill="#070404"/><ellipse cx="1684" cy="587" rx="156" ry="115" fill="#070404"/>
<circle cx="432" cy="568" r="131" fill="#0a0606"/><circle cx="432" cy="568" r="126" fill="#120c0c"/><circle cx="432" cy="568" r="117" fill="none" stroke="#7a2426" stroke-width="5"/><circle cx="432" cy="568" r="106" fill="#3b3a3c"/><path d="M464 485 A89 89 0 0 1 517 587 L487 581 A58 58 0 0 0 453 515Z" fill="#b5342f"/><path d="M449 571L528 587" stroke="#e9e9ea" stroke-width="21" stroke-linecap="round"/><path d="M449 571L528 587" stroke="#a9a9ab" stroke-width="6"/><path d="M443 581L493 644" stroke="#e9e9ea" stroke-width="21" stroke-linecap="round"/><path d="M443 581L493 644" stroke="#a9a9ab" stroke-width="6"/><path d="M432 585L430 665" stroke="#e9e9ea" stroke-width="21" stroke-linecap="round"/><path d="M432 585L430 665" stroke="#a9a9ab" stroke-width="6"/><path d="M421 581L367 641" stroke="#e9e9ea" stroke-width="21" stroke-linecap="round"/><path d="M421 581L367 641" stroke="#a9a9ab" stroke-width="6"/><path d="M415 571L336 582" stroke="#e9e9ea" stroke-width="21" stroke-linecap="round"/><path d="M415 571L336 582" stroke="#a9a9ab" stroke-width="6"/><path d="M418 559L349 517" stroke="#e9e9ea" stroke-width="21" stroke-linecap="round"/><path d="M418 559L349 517" stroke="#a9a9ab" stroke-width="6"/><path d="M427 552L401 476" stroke="#e9e9ea" stroke-width="21" stroke-linecap="round"/><path d="M427 552L401 476" stroke="#a9a9ab" stroke-width="6"/><path d="M438 552L468 477" stroke="#e9e9ea" stroke-width="21" stroke-linecap="round"/><path d="M438 552L468 477" stroke="#a9a9ab" stroke-width="6"/><path d="M447 560L518 521" stroke="#e9e9ea" stroke-width="21" stroke-linecap="round"/><path d="M447 560L518 521" stroke="#a9a9ab" stroke-width="6"/><circle cx="432" cy="568" r="99" fill="none" stroke="#d9d9da" stroke-width="16"/><circle cx="432" cy="568" r="106" fill="none" stroke="#9c9c9e" stroke-width="3"/><circle cx="432" cy="568" r="21" fill="#f0f0f0" stroke="#9a9a9c" stroke-width="3"/>
<circle cx="1683" cy="585" r="143" fill="#0a0606"/><circle cx="1683" cy="585" r="138" fill="#120c0c"/><circle cx="1683" cy="585" r="129" fill="none" stroke="#7a2426" stroke-width="5"/><circle cx="1683" cy="585" r="118" fill="#3b3a3c"/><path d="M1718 493 A99 99 0 0 1 1777 606 L1744 599 A65 65 0 0 0 1707 526Z" fill="#b5342f"/><path d="M1702 589L1789 607" stroke="#e9e9ea" stroke-width="24" stroke-linecap="round"/><path d="M1702 589L1789 607" stroke="#a9a9ab" stroke-width="7"/><path d="M1695 600L1751 670" stroke="#e9e9ea" stroke-width="24" stroke-linecap="round"/><path d="M1695 600L1751 670" stroke="#a9a9ab" stroke-width="7"/><path d="M1683 604L1680 694" stroke="#e9e9ea" stroke-width="24" stroke-linecap="round"/><path d="M1683 604L1680 694" stroke="#a9a9ab" stroke-width="7"/><path d="M1670 599L1611 666" stroke="#e9e9ea" stroke-width="24" stroke-linecap="round"/><path d="M1670 599L1611 666" stroke="#a9a9ab" stroke-width="7"/><path d="M1664 588L1576 601" stroke="#e9e9ea" stroke-width="24" stroke-linecap="round"/><path d="M1664 588L1576 601" stroke="#a9a9ab" stroke-width="7"/><path d="M1667 575L1590 528" stroke="#e9e9ea" stroke-width="24" stroke-linecap="round"/><path d="M1667 575L1590 528" stroke="#a9a9ab" stroke-width="7"/><path d="M1677 567L1648 482" stroke="#e9e9ea" stroke-width="24" stroke-linecap="round"/><path d="M1677 567L1648 482" stroke="#a9a9ab" stroke-width="7"/><path d="M1690 567L1723 484" stroke="#e9e9ea" stroke-width="24" stroke-linecap="round"/><path d="M1690 567L1723 484" stroke="#a9a9ab" stroke-width="7"/><path d="M1700 576L1778 533" stroke="#e9e9ea" stroke-width="24" stroke-linecap="round"/><path d="M1700 576L1778 533" stroke="#a9a9ab" stroke-width="7"/><circle cx="1683" cy="585" r="110" fill="none" stroke="#d9d9da" stroke-width="18"/><circle cx="1683" cy="585" r="118" fill="none" stroke="#9c9c9e" stroke-width="3"/><circle cx="1683" cy="585" r="24" fill="#f0f0f0" stroke="#9a9a9c" stroke-width="3"/>
</svg></div>
<div id="prefs"><div style="left:0px;top:0px;width:1410px;height:161px;background:#f3f0f5"></div>
<div style="left:0px;top:160px;width:1410px;height:1.5px;background:#d3d0d6"></div>
<div style="left:15.8px;top:15.8px;width:24px;height:24px;border-radius:50%;background:#fe5f57;box-shadow:inset 0 0 0 1px rgba(190,40,30,.35)"></div>
<div style="left:55.7px;top:15.8px;width:24px;height:24px;border-radius:50%;background:#d6d4d9;box-shadow:inset 0 0 0 1px rgba(0,0,0,.09)"></div>
<div style="left:95.7px;top:15.8px;width:24px;height:24px;border-radius:50%;background:#d6d4d9;box-shadow:inset 0 0 0 1px rgba(0,0,0,.09)"></div>
<span class="t" style="left:653.8px;top:14.7px;font-size:26px;color:#4b484e;font-weight:700;-webkit-text-stroke:0;letter-spacing:0.56px;">General</span>
<div style="left:31.5px;top:56px;width:109.3px;height:88.8px;border-radius:12px;background:#e6e3e9"></div>
<span class="t" style="left:44.8px;top:113.3px;font-size:23px;color:#1b63c8;letter-spacing:-0.08px;">General</span>
<span class="t" style="left:155.0px;top:113.3px;font-size:23px;color:#716e75;letter-spacing:0.16px;">Appearance</span>
<span class="t" style="left:311.0px;top:113.3px;font-size:23px;color:#716e75;letter-spacing:0.50px;">Control</span>
<span class="t" style="left:421.5px;top:113.3px;font-size:23px;color:#716e75;letter-spacing:0.31px;">Sidebar</span>
<span class="t" style="left:531.5px;top:113.3px;font-size:23px;color:#716e75;letter-spacing:0.13px;">Workspace</span>
<span class="t" style="left:674.3px;top:113.3px;font-size:23px;color:#716e75;letter-spacing:0.54px;">Inspector</span>
<span class="t" style="left:806.6px;top:113.3px;font-size:23px;color:#716e75;letter-spacing:0.10px;">Search</span>
<span class="t" style="left:911.6px;top:113.3px;font-size:23px;color:#716e75;letter-spacing:0.55px;">Shortcuts</span>
<span class="t" style="left:1051.8px;top:113.3px;font-size:23px;color:#716e75;letter-spacing:0.30px;">Portal</span>
<span class="t" style="left:1152.3px;top:113.3px;font-size:23px;color:#716e75;letter-spacing:0.11px;">Advanced</span>
<span class="t" style="left:1293.8px;top:113.3px;font-size:23px;color:#716e75;letter-spacing:0.57px;">About</span>
<svg style="left:64px;top:64px;" width="44" height="44" viewBox="0 0 44 44"><path d="M22.00 2.60L22.34 2.61L22.68 2.61L23.02 2.63L23.35 2.65L23.69 2.68L24.03 2.72L24.36 2.78L24.69 2.87L25.01 3.01L25.30 3.29L25.53 3.82L25.67 4.73L25.71 5.91L25.74 7.00L25.82 7.73L25.97 8.16L26.16 8.41L26.36 8.57L26.58 8.69L26.81 8.79L27.03 8.89L27.26 8.99L27.48 9.08L27.71 9.17L27.94 9.26L28.17 9.35L28.41 9.42L28.67 9.45L28.98 9.41L29.39 9.21L29.96 8.75L30.75 8.00L31.62 7.19L32.35 6.65L32.90 6.44L33.30 6.45L33.63 6.57L33.92 6.74L34.20 6.94L34.46 7.15L34.72 7.36L34.98 7.59L35.23 7.81L35.47 8.05L35.72 8.28L35.95 8.53L36.19 8.77L36.41 9.02L36.64 9.28L36.85 9.54L37.06 9.80L37.26 10.08L37.43 10.37L37.55 10.70L37.56 11.10L37.35 11.65L36.81 12.38L36.00 13.25L35.25 14.04L34.79 14.61L34.59 15.02L34.55 15.33L34.58 15.59L34.65 15.83L34.74 16.06L34.83 16.29L34.92 16.52L35.01 16.74L35.11 16.97L35.21 17.19L35.31 17.42L35.43 17.64L35.59 17.84L35.84 18.03L36.27 18.18L37.00 18.26L38.09 18.29L39.27 18.33L40.18 18.47L40.71 18.70L40.99 18.99L41.13 19.31L41.22 19.64L41.28 19.97L41.32 20.31L41.35 20.65L41.37 20.98L41.39 21.32L41.39 21.66L41.40 22.00L41.39 22.34L41.39 22.68L41.37 23.02L41.35 23.35L41.32 23.69L41.28 24.03L41.22 24.36L41.13 24.69L40.99 25.01L40.71 25.30L40.18 25.53L39.27 25.67L38.09 25.71L37.00 25.74L36.27 25.82L35.84 25.97L35.59 26.16L35.43 26.36L35.31 26.58L35.21 26.81L35.11 27.03L35.01 27.26L34.92 27.48L34.83 27.71L34.74 27.94L34.65 28.17L34.58 28.41L34.55 28.67L34.59 28.98L34.79 29.39L35.25 29.96L36.00 30.75L36.81 31.62L37.35 32.35L37.56 32.90L37.55 33.30L37.43 33.63L37.26 33.92L37.06 34.20L36.85 34.46L36.64 34.72L36.41 34.98L36.19 35.23L35.95 35.47L35.72 35.72L35.47 35.95L35.23 36.19L34.98 36.41L34.72 36.64L34.46 36.85L34.20 37.06L33.92 37.26L33.63 37.43L33.30 37.55L32.90 37.56L32.35 37.35L31.62 36.81L30.75 36.00L29.96 35.25L29.39 34.79L28.98 34.59L28.67 34.55L28.41 34.58L28.17 34.65L27.94 34.74L27.71 34.83L27.48 34.92L27.26 35.01L27.03 35.11L26.81 35.21L26.58 35.31L26.36 35.43L26.16 35.59L25.97 35.84L25.82 36.27L25.74 37.00L25.71 38.09L25.67 39.27L25.53 40.18L25.30 40.71L25.01 40.99L24.69 41.13L24.36 41.22L24.03 41.28L23.69 41.32L23.35 41.35L23.02 41.37L22.68 41.39L22.34 41.39L22.00 41.40L21.66 41.39L21.32 41.39L20.98 41.37L20.65 41.35L20.31 41.32L19.97 41.28L19.64 41.22L19.31 41.13L18.99 40.99L18.70 40.71L18.47 40.18L18.33 39.27L18.29 38.09L18.26 37.00L18.18 36.27L18.03 35.84L17.84 35.59L17.64 35.43L17.42 35.31L17.19 35.21L16.97 35.11L16.74 35.01L16.52 34.92L16.29 34.83L16.06 34.74L15.83 34.65L15.59 34.58L15.33 34.55L15.02 34.59L14.61 34.79L14.04 35.25L13.25 36.00L12.38 36.81L11.65 37.35L11.10 37.56L10.70 37.55L10.37 37.43L10.08 37.26L9.80 37.06L9.54 36.85L9.28 36.64L9.02 36.41L8.77 36.19L8.53 35.95L8.28 35.72L8.05 35.47L7.81 35.23L7.59 34.98L7.36 34.72L7.15 34.46L6.94 34.20L6.74 33.92L6.57 33.63L6.45 33.30L6.44 32.90L6.65 32.35L7.19 31.62L8.00 30.75L8.75 29.96L9.21 29.39L9.41 28.98L9.45 28.67L9.42 28.41L9.35 28.17L9.26 27.94L9.17 27.71L9.08 27.48L8.99 27.26L8.89 27.03L8.79 26.81L8.69 26.58L8.57 26.36L8.41 26.16L8.16 25.97L7.73 25.82L7.00 25.74L5.91 25.71L4.73 25.67L3.82 25.53L3.29 25.30L3.01 25.01L2.87 24.69L2.78 24.36L2.72 24.03L2.68 23.69L2.65 23.35L2.63 23.02L2.61 22.68L2.61 22.34L2.60 22.00L2.61 21.66L2.61 21.32L2.63 20.98L2.65 20.65L2.68 20.31L2.72 19.97L2.78 19.64L2.87 19.31L3.01 18.99L3.29 18.70L3.82 18.47L4.73 18.33L5.91 18.29L7.00 18.26L7.73 18.18L8.16 18.03L8.41 17.84L8.57 17.64L8.69 17.42L8.79 17.19L8.89 16.97L8.99 16.74L9.08 16.52L9.17 16.29L9.26 16.06L9.35 15.83L9.42 15.59L9.45 15.33L9.41 15.02L9.21 14.61L8.75 14.04L8.00 13.25L7.19 12.38L6.65 11.65L6.44 11.10L6.45 10.70L6.57 10.37L6.74 10.08L6.94 9.80L7.15 9.54L7.36 9.28L7.59 9.02L7.81 8.77L8.05 8.53L8.28 8.28L8.53 8.05L8.77 7.81L9.02 7.59L9.28 7.36L9.54 7.15L9.80 6.94L10.08 6.74L10.37 6.57L10.70 6.45L11.10 6.44L11.65 6.65L12.38 7.19L13.25 8.00L14.04 8.75L14.61 9.21L15.02 9.41L15.33 9.45L15.59 9.42L15.83 9.35L16.06 9.26L16.29 9.17L16.52 9.08L16.74 8.99L16.97 8.89L17.19 8.79L17.42 8.69L17.64 8.57L17.84 8.41L18.03 8.16L18.18 7.73L18.26 7.00L18.29 5.91L18.33 4.73L18.47 3.82L18.70 3.29L18.99 3.01L19.31 2.87L19.64 2.78L19.97 2.72L20.31 2.68L20.65 2.65L20.98 2.63L21.32 2.61L21.66 2.61Z" fill="none" stroke="#1b66d2" stroke-width="3.400" stroke-linejoin="round"/><circle cx="22" cy="22" r="5.800" fill="none" stroke="#1b66d2" stroke-width="3.400"/></svg>
<svg style="left:195px;top:62px;" width="46" height="50" viewBox="0 0 46 50"><g transform="translate(19.600 29.600) rotate(41.500)"><path d="M-11.500 -3.500V-20.300q0-2.500 2.500-2.500h18q2.500 0 2.500 2.500V-3.500" fill="none" stroke="#716e75" stroke-width="3.500" stroke-linecap="round" stroke-linejoin="round"/><rect x="-13.300" y="-3.500" width="26.600" height="6.800" rx="2" fill="none" stroke="#716e75" stroke-width="3.500" stroke-linecap="round" stroke-linejoin="round"/><path d="M-3.600 3.300l-1.300 11.700q-.6 5.400 4.900 5.400t4.900-5.400L3.600 3.300" fill="none" stroke="#716e75" stroke-width="3.500" stroke-linecap="round" stroke-linejoin="round"/><circle cx="0" cy="14.600" r="1.800" fill="#716e75"/><path d="M11.500 -12q-7 .8-7.500-3.700t-3.500-6.500" fill="none" stroke="#716e75" stroke-width="2.800" stroke-linecap="round"/></g></svg>
<svg style="left:328px;top:62px;" width="42" height="48" viewBox="0 0 42 48"><path d="M5.400 17.200A8.400 8.400 0 1 1 19.300 14.600" fill="none" stroke="#716e75" stroke-width="3.200" stroke-linecap="round" stroke-linejoin="round"/><path d="M9.200 32.700V9.400a2.600 2.600 0 0 1 5.200 0V23.500M14.400 20.800a3.500 3.500 0 0 1 7 0V25M21.400 22.800a3.600 3.600 0 0 1 7.200 0V26.500M28.600 25.600a4.200 4.200 0 0 1 8.400 0V33.600q0 12-12 12H20.500q-5.500 0-9-4.600L2.800 31q-1.600-2.300.500-3.800t3.900.900L9.200 32.700" fill="none" stroke="#716e75" stroke-width="3.200" stroke-linecap="round" stroke-linejoin="round"/></svg>
<svg style="left:437px;top:68px;" width="48" height="36" viewBox="0 0 48 36"><rect x="2" y="2" width="44" height="32" rx="5.500" fill="none" stroke="#716e75" stroke-width="3.500" stroke-linecap="round" stroke-linejoin="round"/><path d="M17.500 2.500v31" stroke="#716e75" stroke-width="3.300"/><path d="M7.500 10h5M7.500 15.500h5M7.500 21h5" stroke="#716e75" stroke-width="2.600" stroke-linecap="round"/></svg>
<svg style="left:565px;top:68px;" width="48" height="36" viewBox="0 0 48 36"><rect x="2" y="2" width="44" height="32" rx="5.500" fill="none" stroke="#716e75" stroke-width="3.500" stroke-linecap="round" stroke-linejoin="round"/><path d="M2.500 13h43M24 13v20.500" stroke="#716e75" stroke-width="3.300"/></svg>
<svg style="left:699px;top:68px;" width="48" height="36" viewBox="0 0 48 36"><rect x="2" y="2" width="44" height="32" rx="5.500" fill="none" stroke="#716e75" stroke-width="3.500" stroke-linecap="round" stroke-linejoin="round"/><path d="M30.500 2.500v31" stroke="#716e75" stroke-width="3.300"/><path d="M35.500 10h5M35.500 15.500h5M35.500 21h5" stroke="#716e75" stroke-width="2.600" stroke-linecap="round"/></svg>
<svg style="left:822px;top:66px;" width="40" height="41" viewBox="0 0 40 41"><circle cx="16.600" cy="16.800" r="13.600" fill="none" stroke="#716e75" stroke-width="3.500" stroke-linecap="round" stroke-linejoin="round"/><path d="M27 27.200L37.500 38" stroke="#716e75" stroke-width="4.200" stroke-linecap="round"/><path d="M16.500 7.500q.8 8.200 9 9q-8.200.8-9 9q-.8-8.200-9-9q8.200-.8 9-9z" fill="#716e75"/></svg>
<svg style="left:944px;top:68px;" width="38" height="36" viewBox="0 0 38 36"><rect x="2" y="2" width="34" height="32" rx="5.500" fill="none" stroke="#716e75" stroke-width="3.500" stroke-linecap="round" stroke-linejoin="round"/><path d="M15 14.500h8v7h-8zM15 14.500h-2.200a2.700 2.700 0 1 1 2.700-2.700V14.500M23 14.500h2.200a2.700 2.700 0 1 0-2.700-2.700V14.500M15 21.500h-2.200a2.700 2.700 0 1 0 2.700 2.700V21.500M23 21.500h2.200a2.700 2.700 0 1 1-2.700 2.700V21.500" fill="none" stroke="#716e75" stroke-width="2.500" stroke-linejoin="round"/></svg>
<svg style="left:1066px;top:65px;" width="33" height="43" viewBox="0 0 33 43"><path d="M3.200 41V5.500q0-3 3-3h20.600q3 0 3 3V41" fill="none" stroke="#716e75" stroke-width="3.200" stroke-linecap="round" stroke-linejoin="round"/><path d="M7.800 6.800l6.600 2v27.400l-6.600 2.600z" fill="#716e75" stroke="#716e75" stroke-width="1.200" stroke-linejoin="round"/></svg>
<svg style="left:1178px;top:62px;" width="50" height="48" viewBox="0 0 50 48"><g transform="translate(5.200 4.600) rotate(-45)"><rect x="-4.300" y="0" width="8.600" height="21.500" rx="2.600" fill="none" stroke="#716e75" stroke-width="3.500" stroke-linecap="round" stroke-linejoin="round"/><path d="M-1.500 4.500v10.500M1.500 4.500v10.500" stroke="#716e75" stroke-width="1.500" stroke-linecap="round"/><path d="M-1 21.500v16M1 21.500v16" stroke="#716e75" stroke-width="1.800"/><rect x="-2.700" y="37" width="5.400" height="17.500" rx="1.600" fill="none" stroke="#716e75" stroke-width="3"/></g><g transform="translate(10 39) rotate(46.400)"><path d="M-2.800 -5.640A6.300 6.300 0 1 0 2.800 -5.640L2.800 -28.480A9.500 9.500 0 0 0 3.400 -46.430L3.400 -39.500A3.400 3.400 0 0 1 -3.400 -39.500L-3.400 -46.430A9.500 9.500 0 0 0 -2.800 -28.480Z" fill="#f3f0f5" stroke="#f3f0f5" stroke-width="5.500" stroke-linejoin="round"/><path d="M-2.800 -5.640A6.300 6.300 0 1 0 2.800 -5.640L2.800 -28.480A9.500 9.500 0 0 0 3.400 -46.430L3.400 -39.500A3.400 3.400 0 0 1 -3.400 -39.500L-3.400 -46.430A9.500 9.500 0 0 0 -2.800 -28.480Z" fill="none" stroke="#716e75" stroke-width="3.500" stroke-linecap="round" stroke-linejoin="round"/><circle cx="0" cy="0" r="1.700" fill="#716e75"/></g></svg>
<svg style="left:1303px;top:65px;" width="43" height="43" viewBox="0 0 43 43"><circle cx="21.500" cy="21.500" r="18.800" fill="none" stroke="#716e75" stroke-width="3.500" stroke-linecap="round" stroke-linejoin="round"/><circle cx="21" cy="12.500" r="2.500" fill="#716e75"/><path d="M17.500 19h5v11.500M16.500 31h10.500" fill="none" stroke="#716e75" stroke-width="3.200" stroke-linecap="round" stroke-linejoin="round"/></svg>
<span class="t" style="left:382.4px;top:192.9px;font-size:25px;color:#242128;letter-spacing:0.84px;">Show Menu Bar Icon:</span>
<div class="cb" style="left:653px;top:192px;width:28px;height:28px;"></div>
<span class="t" style="left:383.1px;top:253.1px;font-size:25px;color:#242128;letter-spacing:0.85px;">Keep Folders on Top:</span>
<div class="cb" style="left:653px;top:252px;width:28px;height:28px;"></div>
<span class="t" style="left:378.0px;top:310.9px;font-size:25px;color:#242128;letter-spacing:0.70px;">Restore Last Session:</span>
<div class="cb" style="left:653px;top:308px;width:28px;height:28px;"></div>
<span class="t" style="left:699.0px;top:311.0px;font-size:22.3px;color:#747178;letter-spacing:0.88px;">On Launch</span>
<div class="cb" style="left:849px;top:308px;width:28px;height:28px;"></div>
<span class="t" style="left:894.7px;top:311.0px;font-size:22.3px;color:#747178;letter-spacing:1.06px;">On New Window</span>
<span class="t" style="left:311.9px;top:366.9px;font-size:25px;color:#242128;letter-spacing:0.91px;">Inherit Panel View Options:</span>
<div class="cb" style="left:653px;top:364px;width:28px;height:28px;"></div>
<span class="t" style="left:698.5px;top:367.3px;font-size:22.3px;color:#747178;letter-spacing:1.04px;">Apply the same view options as the parent or the last.</span>
<span class="t" style="left:341.3px;top:422.9px;font-size:25px;color:#242128;letter-spacing:0.98px;">Paste Images from Web:</span>
<div class="cb on" style="left:653px;top:420px;width:28px;height:28px;"><svg width="28" height="28" viewBox="0 0 28 28" style="left:0;top:0"><path d="M7.300 14.800l4.700 5.300 8.700-12.400" fill="none" stroke="#fff" stroke-width="3.300" stroke-linecap="round" stroke-linejoin="round"/></svg></div>
<span class="t" style="left:698.5px;top:423.4px;font-size:22.3px;color:#747178;letter-spacing:1.11px;">Copy images from web and paste them directly.</span>
<span class="t" style="left:425.3px;top:482.5px;font-size:25px;color:#242128;letter-spacing:0.99px;">Open in Terminal:</span>
<div class="btn" style="left:653px;top:474.3px;width:78px;height:39.7px;"></div>
<span class="t" style="left:668.9px;top:480.9px;font-size:25px;color:#222;letter-spacing:0.94px;">Edit</span>
<div class="btn" style="left:747.7px;top:474.3px;width:150.3px;height:39.7px;"></div>
<span class="t" style="left:763.8px;top:480.9px;font-size:25px;color:#222;letter-spacing:1.22px;">Configure</span>
<svg style="left:917.5px;top:480.5px;" width="27" height="27" viewBox="0 0 27 27"><rect x=".5" y=".5" width="26" height="26" rx="6" fill="#1e1c20" stroke="#4a484c" stroke-width="1"/><path d="M5.500 6.500l3 2-3 2M10 11h3.500" fill="none" stroke="#f2f2f2" stroke-width="1.400" stroke-linecap="round" stroke-linejoin="round"/></svg>
<span class="t" style="left:955.0px;top:483.0px;font-size:22.5px;color:#78757c;font-weight:700;-webkit-text-stroke:0;letter-spacing:0.66px;">Terminal</span>
<span class="t" style="left:398.6px;top:546.5px;font-size:25px;color:#242128;letter-spacing:0.99px;">Open in Text Editor:</span>
<div class="btn" style="left:653px;top:538.4px;width:78px;height:39.7px;"></div>
<span class="t" style="left:668.9px;top:544.5px;font-size:25px;color:#222;letter-spacing:0.94px;">Edit</span>
<svg style="left:749px;top:542px;" width="31" height="32" viewBox="0 0 31 32"><path d="M2 4q0-2 2-2h19q2 0 2 2v23q0 2-2 2H4q-2 0-2-2z" fill="#f8f6f4" stroke="#cfccd0" stroke-width="1"/><path d="M4 9h20M4 13h20M4 17h20M4 21h20M4 25h20" stroke="#e8b9b0" stroke-width=".9"/><path d="M8 3v25M12 3v25M16 3v25M20 3v25" stroke="#dcdfe8" stroke-width=".8"/><path d="M27.500 1.500l2 1.200L14.500 29l-3 1.500.6-3.200z" fill="#8b8a90" stroke="#5f5e64" stroke-width=".8"/></svg>
<span class="t" style="left:788.2px;top:546.6px;font-size:22.5px;color:#78757c;font-weight:700;-webkit-text-stroke:0;letter-spacing:0.64px;">TextEdit</span>
<span class="t" style="left:199.6px;top:607.1px;font-size:25px;color:#242128;letter-spacing:1.05px;">Skip Volume Check When Dragging:</span>
<div class="cb" style="left:653px;top:606px;width:28px;height:28px;"></div>
<span class="t" style="left:698.5px;top:609.4px;font-size:22.3px;color:#747178;letter-spacing:1.07px;">Use “Copy” when dragging files across volumes.</span>
<span class="t" style="left:242.2px;top:663.1px;font-size:25px;color:#242128;letter-spacing:0.92px;">Show Warning Before Removing:</span>
<div class="cb on" style="left:653px;top:662px;width:28px;height:28px;"><svg width="28" height="28" viewBox="0 0 28 28" style="left:0;top:0"><path d="M7.300 14.800l4.700 5.300 8.700-12.400" fill="none" stroke="#fff" stroke-width="3.300" stroke-linecap="round" stroke-linejoin="round"/></svg></div>
<span class="t" style="left:698.5px;top:664.9px;font-size:22.3px;color:#747178;letter-spacing:1.10px;">Show confirmation dialog before removing files permanently.</span>
<span class="t" style="left:314.3px;top:719.1px;font-size:25px;color:#242128;letter-spacing:1.04px;">Open archives with Bloom:</span>
<div class="cb on" style="left:653px;top:718px;width:28px;height:28px;"><svg width="28" height="28" viewBox="0 0 28 28" style="left:0;top:0"><path d="M7.300 14.800l4.700 5.300 8.700-12.400" fill="none" stroke="#fff" stroke-width="3.300" stroke-linecap="round" stroke-linejoin="round"/></svg></div>
<span class="t" style="left:698.5px;top:721.0px;font-size:22.3px;color:#747178;letter-spacing:1.18px;">Use “Bloom” to extract archives.</span>
<span class="t" style="left:256.7px;top:775.1px;font-size:25px;color:#242128;letter-spacing:0.94px;">Show Folder Sizes in Inspector:</span>
<div class="cb" style="left:653px;top:774px;width:28px;height:28px;"></div>
<span class="t" style="left:698.5px;top:777.2px;font-size:22.3px;color:#747178;letter-spacing:1.05px;">Calculate the total size of selection in the inspector panel.</span>
<div class="sep" style="left:24.4px;top:826px;width:1360px;height:1.6px;"></div>
<span class="t" style="left:471.9px;top:859.8px;font-size:25px;color:#242128;letter-spacing:1.33px;">Window Title:</span>
<span class="t" style="left:524.9px;top:923.8px;font-size:25px;color:#242128;letter-spacing:1.29px;">Tab Title:</span>
<div class="btn" style="left:653px;top:852.4px;width:393.6px;height:39.7px;"></div>
<span class="t" style="left:669.1px;top:858.7px;font-size:25px;color:#222;letter-spacing:0.96px;">Current Folder Name</span>
<div style="left:1010.6px;top:856.2px;width:33px;height:32px;"><svg width="33" height="32" viewBox="0 0 33 32" style="left:0;top:0"><defs><linearGradient id="sg1" x1="0" y1="0" x2="0" y2="1"><stop offset="0" stop-color="#4595fa"/><stop offset="1" stop-color="#0f62e3"/></linearGradient></defs><rect width="33" height="32" rx="8" fill="url(#sg1)"/><path d="M10.800 13l5.700-5.600 5.700 5.600M10.800 19l5.700 5.600 5.700-5.600" fill="none" stroke="#fff" stroke-width="3" stroke-linecap="round" stroke-linejoin="round"/></svg></div>
<div class="btn" style="left:653px;top:916.6px;width:393.6px;height:39.7px;"></div>
<span class="t" style="left:669.1px;top:923.0px;font-size:25px;color:#222;letter-spacing:1.06px;">Workspace(Current Folder)</span>
<div style="left:1010.6px;top:920.4px;width:33px;height:32px;"><svg width="33" height="32" viewBox="0 0 33 32" style="left:0;top:0"><defs><linearGradient id="sg2" x1="0" y1="0" x2="0" y2="1"><stop offset="0" stop-color="#4595fa"/><stop offset="1" stop-color="#0f62e3"/></linearGradient></defs><rect width="33" height="32" rx="8" fill="url(#sg2)"/><path d="M10.800 13l5.700-5.600 5.700 5.600M10.800 19l5.700 5.600 5.700-5.600" fill="none" stroke="#fff" stroke-width="3" stroke-linecap="round" stroke-linejoin="round"/></svg></div>
<div class="sep" style="left:24.4px;top:980px;width:1360px;height:1.6px;"></div>
<span class="t" style="left:433.6px;top:1009.5px;font-size:25px;color:#242128;letter-spacing:1.13px;">Use Thumbnails:</span>
<div class="cb on" style="left:653px;top:1008px;width:28px;height:28px;"><svg width="28" height="28" viewBox="0 0 28 28" style="left:0;top:0"><path d="M7.300 14.800l4.700 5.300 8.700-12.400" fill="none" stroke="#fff" stroke-width="3.300" stroke-linecap="round" stroke-linejoin="round"/></svg></div>
<span class="t" style="left:698.5px;top:1011.3px;font-size:22.3px;color:#747178;letter-spacing:0.98px;">Show preview thumbnails for files when available.</span>
<span class="t" style="left:459.1px;top:1067.5px;font-size:25px;color:#242128;letter-spacing:1.17px;">Sound Effects:</span>
<div class="cb on" style="left:653px;top:1066px;width:28px;height:28px;"><svg width="28" height="28" viewBox="0 0 28 28" style="left:0;top:0"><path d="M7.300 14.800l4.700 5.300 8.700-12.400" fill="none" stroke="#fff" stroke-width="3.300" stroke-linecap="round" stroke-linejoin="round"/></svg></div>
<span class="t" style="left:698.5px;top:1069.0px;font-size:22.3px;color:#747178;letter-spacing:1.05px;">Play sound on task completion.</span>
<div class="sep" style="left:24.4px;top:1118px;width:1360px;height:1.6px;"></div>
<span class="t" style="left:309.3px;top:1149.3px;font-size:25px;color:#242128;letter-spacing:0.82px;">Auto Resize Name Column:</span>
<div class="cb on" style="left:653px;top:1148px;width:28px;height:28px;"><svg width="28" height="28" viewBox="0 0 28 28" style="left:0;top:0"><path d="M7.300 14.800l4.700 5.300 8.700-12.400" fill="none" stroke="#fff" stroke-width="3.300" stroke-linecap="round" stroke-linejoin="round"/></svg></div>
<span class="t" style="left:698.5px;top:1150.6px;font-size:22.3px;color:#747178;letter-spacing:0.98px;">Resize the name column automatically in list view</span>
<span class="t" style="left:652.7px;top:1198.5px;font-size:24px;color:#242128;letter-spacing:0.92px;">Min width:</span>
<div style="left:812.5px;top:1206.2px;width:200.5px;height:8.6px;border-radius:4px;background:#dddae0"></div>
<div style="left:812.9px;top:1202.3px;width:3px;height:16.4px;border-radius:1.500px;background:#d1ced4"></div>
<div style="left:845.7px;top:1202.3px;width:3px;height:16.4px;border-radius:1.500px;background:#d1ced4"></div>
<div style="left:878.5px;top:1202.3px;width:3px;height:16.4px;border-radius:1.500px;background:#d1ced4"></div>
<div style="left:911.3px;top:1202.3px;width:3px;height:16.4px;border-radius:1.500px;background:#d1ced4"></div>
<div style="left:944.1px;top:1202.3px;width:3px;height:16.4px;border-radius:1.500px;background:#d1ced4"></div>
<div style="left:976.9px;top:1202.3px;width:3px;height:16.4px;border-radius:1.500px;background:#d1ced4"></div>
<div style="left:1009.7px;top:1202.3px;width:3px;height:16.4px;border-radius:1.500px;background:#d1ced4"></div>
<div style="left:843.5px;top:1194.2px;width:16.6px;height:32.6px;border-radius:8.300px;background:#fff;box-shadow:0 0 0 .6px rgba(0,0,0,.10),0 1px 3px rgba(0,0,0,.28)"></div>
<span class="t" style="left:1028.4px;top:1199.4px;font-size:23px;color:#78757c;font-weight:700;-webkit-text-stroke:0;letter-spacing:0.92px;">210.0</span>
<span class="t" style="left:652.7px;top:1245.6px;font-size:24px;color:#242128;letter-spacing:0.84px;">Max width:</span>
<div style="left:812.5px;top:1253.3px;width:200.5px;height:8.6px;border-radius:4px;background:#dddae0"></div>
<div style="left:812.9px;top:1249.4px;width:3px;height:16.4px;border-radius:1.500px;background:#d1ced4"></div>
<div style="left:845.7px;top:1249.4px;width:3px;height:16.4px;border-radius:1.500px;background:#d1ced4"></div>
<div style="left:878.5px;top:1249.4px;width:3px;height:16.4px;border-radius:1.500px;background:#d1ced4"></div>
<div style="left:911.3px;top:1249.4px;width:3px;height:16.4px;border-radius:1.500px;background:#d1ced4"></div>
<div style="left:944.1px;top:1249.4px;width:3px;height:16.4px;border-radius:1.500px;background:#d1ced4"></div>
<div style="left:976.9px;top:1249.4px;width:3px;height:16.4px;border-radius:1.500px;background:#d1ced4"></div>
<div style="left:1009.7px;top:1249.4px;width:3px;height:16.4px;border-radius:1.500px;background:#d1ced4"></div>
<div style="left:843.5px;top:1241.3px;width:16.6px;height:32.6px;border-radius:8.300px;background:#fff;box-shadow:0 0 0 .6px rgba(0,0,0,.10),0 1px 3px rgba(0,0,0,.28)"></div>
<span class="t" style="left:1028.4px;top:1246.5px;font-size:23px;color:#78757c;font-weight:700;-webkit-text-stroke:0;letter-spacing:1.72px;">420.0</span>
<div class="cb" style="left:1253px;top:1243.5px;width:28px;height:28px;"></div>
<span class="t" style="left:1290.7px;top:1246.2px;font-size:25px;color:#242128;letter-spacing:1.25px;">Infinity</span>
<div class="sep" style="left:24.4px;top:1297.3px;width:1360px;height:1.6px;"></div>
<span class="t" style="left:386.5px;top:1328.3px;font-size:25px;color:#242128;letter-spacing:0.84px;">Auto Resize Column:</span>
<div class="cb on" style="left:653px;top:1327px;width:28px;height:28px;"><svg width="28" height="28" viewBox="0 0 28 28" style="left:0;top:0"><path d="M7.300 14.800l4.700 5.300 8.700-12.400" fill="none" stroke="#fff" stroke-width="3.300" stroke-linecap="round" stroke-linejoin="round"/></svg></div>
<span class="t" style="left:698.5px;top:1329.6px;font-size:22.3px;color:#747178;letter-spacing:1.02px;">Resize the column automatically in column view</span>
<span class="t" style="left:652.7px;top:1376.6px;font-size:24px;color:#242128;letter-spacing:0.92px;">Min width:</span>
<div style="left:812.5px;top:1384.3px;width:200.5px;height:8.6px;border-radius:4px;background:#dddae0"></div>
<div style="left:812.9px;top:1380.4px;width:3px;height:16.4px;border-radius:1.500px;background:#d1ced4"></div>
<div style="left:845.7px;top:1380.4px;width:3px;height:16.4px;border-radius:1.500px;background:#d1ced4"></div>
<div style="left:878.5px;top:1380.4px;width:3px;height:16.4px;border-radius:1.500px;background:#d1ced4"></div>
<div style="left:911.3px;top:1380.4px;width:3px;height:16.4px;border-radius:1.500px;background:#d1ced4"></div>
<div style="left:944.1px;top:1380.4px;width:3px;height:16.4px;border-radius:1.500px;background:#d1ced4"></div>
<div style="left:976.9px;top:1380.4px;width:3px;height:16.4px;border-radius:1.500px;background:#d1ced4"></div>
<div style="left:1009.7px;top:1380.4px;width:3px;height:16.4px;border-radius:1.500px;background:#d1ced4"></div>
<div style="left:843.5px;top:1372.3px;width:16.6px;height:32.6px;border-radius:8.300px;background:#fff;box-shadow:0 0 0 .6px rgba(0,0,0,.10),0 1px 3px rgba(0,0,0,.28)"></div>
<span class="t" style="left:1028.4px;top:1377.5px;font-size:23px;color:#78757c;font-weight:700;-webkit-text-stroke:0;letter-spacing:0.92px;">210.0</span>
<div style="left:1342.8px;top:307px;width:30px;height:30px;border-radius:50%;background:#27242a"></div>
<span class="t" style="left:1352.4px;top:313.2px;font-size:19.5px;color:#fff;font-weight:700;-webkit-text-stroke:0;letter-spacing:-0.57px;">?</span>
<div style="left:0px;top:1286px;width:1410px;height:121px;background:linear-gradient(180deg,rgba(60,50,70,0) 0%,rgba(60,50,70,.035) 40%,rgba(60,50,70,.075) 72%,rgba(60,50,70,.20) 100%)"></div>
<div style="left:0px;top:1538.5px;width:1410px;height:12px;background:#d6d3d9"></div></div>
<div id="dock"><div style="left:0px;top:0px;width:1631px;height:134px;background:linear-gradient(90deg,#8666a3 0px,#8c6ea9 60px,#9579b0 92px,#b9a3cc 120px,#d8cbe3 147px,#e5dcec 174px,#e8e1ee 205px,#e7e1ed 1400px,#e1d9e8 1458px,#cfc4da 1486px,#a596b8 1524px,#8d7ba3 1550px,#7e6c94 1630px);border-radius:30px;box-shadow:inset 0 0 0 1.200px rgba(255,255,255,.26)"></div>
<svg style="left:20px;top:21px;" width="84" height="84" viewBox="0 0 84 84"><defs><clipPath id="ic484"><rect width="84" height="84" rx="19.500"/></clipPath><linearGradient id="fb" x1="0" y1="0" x2="0" y2="1"><stop offset="0" stop-color="#22bdfc"/><stop offset="1" stop-color="#1b74ef"/></linearGradient><linearGradient id="fw" x1="0" y1="0" x2="0" y2="1"><stop offset="0" stop-color="#f7f7f9"/><stop offset="1" stop-color="#dde2ea"/></linearGradient></defs><g clip-path="url(#ic484)"><rect width="84" height="84" fill="url(#fb)"/><path d="M44.900 0H84v84H53q-4.200-12-4.500-24-.300-6-.900-11.100l-12.200-2.700Q37 31 41 15 42.600 6 44.900 0z" fill="url(#fw)"/><path d="M16.400 55.700q25.600 21.600 50.800 0" fill="none" stroke="#10233a" stroke-width="3" stroke-linecap="round"/><rect x="20.300" y="23.500" width="3.600" height="8.200" rx="1.800" fill="#17304c"/><rect x="60" y="23.500" width="3.600" height="8.200" rx="1.800" fill="#17304c"/></g></svg>
<svg style="left:132px;top:21px;" width="84" height="84" viewBox="0 0 84 84"><defs><clipPath id="ic596"><rect width="84" height="84" rx="19.500"/></clipPath><linearGradient id="lp00" x1="0" y1="0" x2="0" y2="1"><stop offset="0" stop-color="#5ee264"/><stop offset="1" stop-color="#2fc53c"/></linearGradient><linearGradient id="lp01" x1="0" y1="0" x2="0" y2="1"><stop offset="0" stop-color="#ffd133"/><stop offset="1" stop-color="#f7ab12"/></linearGradient><linearGradient id="lp02" x1="0" y1="0" x2="0" y2="1"><stop offset="0" stop-color="#ff9a24"/><stop offset="1" stop-color="#ee7412"/></linearGradient><linearGradient id="lp10" x1="0" y1="0" x2="0" y2="1"><stop offset="0" stop-color="#f5382c"/><stop offset="1" stop-color="#c61510"/></linearGradient><linearGradient id="lp11" x1="0" y1="0" x2="0" y2="1"><stop offset="0" stop-color="#c9cacd"/><stop offset="1" stop-color="#8e9094"/></linearGradient><linearGradient id="lp12" x1="0" y1="0" x2="0" y2="1"><stop offset="0" stop-color="#ff5474"/><stop offset="1" stop-color="#f02c52"/></linearGradient><linearGradient id="lp20" x1="0" y1="0" x2="0" y2="1"><stop offset="0" stop-color="#b957ee"/><stop offset="1" stop-color="#8e35d0"/></linearGradient><linearGradient id="lp21" x1="0" y1="0" x2="0" y2="1"><stop offset="0" stop-color="#31b9fb"/><stop offset="1" stop-color="#1a7ff0"/></linearGradient><linearGradient id="lp22" x1="0" y1="0" x2="0" y2="1"><stop offset="0" stop-color="#3bdcb8"/><stop offset="1" stop-color="#1fbf98"/></linearGradient></defs><g clip-path="url(#ic596)"><rect width="84" height="84" fill="#f1eff4"/><rect x="14.1" y="14.4" width="15" height="15" rx="4.200" fill="url(#lp00)"/><rect x="34.45" y="14.4" width="15" height="15" rx="4.200" fill="url(#lp01)"/><rect x="54.8" y="14.4" width="15" height="15" rx="4.200" fill="url(#lp02)"/><rect x="14.1" y="34.9" width="15" height="15" rx="4.200" fill="url(#lp10)"/><rect x="34.45" y="34.9" width="15" height="15" rx="4.200" fill="url(#lp11)"/><rect x="54.8" y="34.9" width="15" height="15" rx="4.200" fill="url(#lp12)"/><rect x="14.1" y="55.4" width="15" height="15" rx="4.200" fill="url(#lp20)"/><rect x="34.45" y="55.4" width="15" height="15" rx="4.200" fill="url(#lp21)"/><rect x="54.8" y="55.4" width="15" height="15" rx="4.200" fill="url(#lp22)"/></g></svg>
<svg style="left:244px;top:21px;" width="84" height="84" viewBox="0 0 84 84"><defs><clipPath id="ic708"><rect width="84" height="84" rx="19.500"/></clipPath><linearGradient id="sw" x1="0" y1="0" x2="0" y2="1"><stop offset="0" stop-color="#ffffff"/><stop offset="1" stop-color="#e4e4e6"/></linearGradient><linearGradient id="sb" x1="0" y1="0" x2="0" y2="1"><stop offset="0" stop-color="#1fa0f2"/><stop offset="1" stop-color="#1e6fe0"/></linearGradient></defs><g clip-path="url(#ic708)"><rect width="84" height="84" fill="url(#sw)"/><circle cx="42" cy="42" r="35.5" fill="url(#sb)"/><path d="M42 9.5v5" transform="rotate(0.0 42 42)" stroke="#fff" stroke-width="1" opacity=".85"/><path d="M42 9.5v3" transform="rotate(7.5 42 42)" stroke="#fff" stroke-width="1" opacity=".85"/><path d="M42 9.5v5" transform="rotate(15.0 42 42)" stroke="#fff" stroke-width="1" opacity=".85"/><path d="M42 9.5v3" transform="rotate(22.5 42 42)" stroke="#fff" stroke-width="1" opacity=".85"/><path d="M42 9.5v5" transform="rotate(30.0 42 42)" stroke="#fff" stroke-width="1" opacity=".85"/><path d="M42 9.5v3" transform="rotate(37.5 42 42)" stroke="#fff" stroke-width="1" opacity=".85"/><path d="M42 9.5v5" transform="rotate(45.0 42 42)" stroke="#fff" stroke-width="1" opacity=".85"/><path d="M42 9.5v3" transform="rotate(52.5 42 42)" stroke="#fff" stroke-width="1" opacity=".85"/><path d="M42 9.5v5" transform="rotate(60.0 42 42)" stroke="#fff" stroke-width="1" opacity=".85"/><path d="M42 9.5v3" transform="rotate(67.5 42 42)" stroke="#fff" stroke-width="1" opacity=".85"/><path d="M42 9.5v5" transform="rotate(75.0 42 42)" stroke="#fff" stroke-width="1" opacity=".85"/><path d="M42 9.5v3" transform="rotate(82.5 42 42)" stroke="#fff" stroke-width="1" opacity=".85"/><path d="M42 9.5v5" transform="rotate(90.0 42 42)" stroke="#fff" stroke-width="1" opacity=".85"/><path d="M42 9.5v3" transform="rotate(97.5 42 42)" stroke="#fff" stroke-width="1" opacity=".85"/><path d="M42 9.5v5" transform="rotate(105.0 42 42)" stroke="#fff" stroke-width="1" opacity=".85"/><path d="M42 9.5v3" transform="rotate(112.5 42 42)" stroke="#fff" stroke-width="1" opacity=".85"/><path d="M42 9.5v5" transform="rotate(120.0 42 42)" stroke="#fff" stroke-width="1" opacity=".85"/><path d="M42 9.5v3" transform="rotate(127.5 42 42)" stroke="#fff" stroke-width="1" opacity=".85"/><path d="M42 9.5v5" transform="rotate(135.0 42 42)" stroke="#fff" stroke-width="1" opacity=".85"/><path d="M42 9.5v3" transform="rotate(142.5 42 42)" stroke="#fff" stroke-width="1" opacity=".85"/><path d="M42 9.5v5" transform="rotate(150.0 42 42)" stroke="#fff" stroke-width="1" opacity=".85"/><path d="M42 9.5v3" transform="rotate(157.5 42 42)" stroke="#fff" stroke-width="1" opacity=".85"/><path d="M42 9.5v5" transform="rotate(165.0 42 42)" stroke="#fff" stroke-width="1" opacity=".85"/><path d="M42 9.5v3" transform="rotate(172.5 42 42)" stroke="#fff" stroke-width="1" opacity=".85"/><path d="M42 9.5v5" transform="rotate(180.0 42 42)" stroke="#fff" stroke-width="1" opacity=".85"/><path d="M42 9.5v3" transform="rotate(187.5 42 42)" stroke="#fff" stroke-width="1" opacity=".85"/><path d="M42 9.5v5" transform="rotate(195.0 42 42)" stroke="#fff" stroke-width="1" opacity=".85"/><path d="M42 9.5v3" transform="rotate(202.5 42 42)" stroke="#fff" stroke-width="1" opacity=".85"/><path d="M42 9.5v5" transform="rotate(210.0 42 42)" stroke="#fff" stroke-width="1" opacity=".85"/><path d="M42 9.5v3" transform="rotate(217.5 42 42)" stroke="#fff" stroke-width="1" opacity=".85"/><path d="M42 9.5v5" transform="rotate(225.0 42 42)" stroke="#fff" stroke-width="1" opacity=".85"/><path d="M42 9.5v3" transform="rotate(232.5 42 42)" stroke="#fff" stroke-width="1" opacity=".85"/><path d="M42 9.5v5" transform="rotate(240.0 42 42)" stroke="#fff" stroke-width="1" opacity=".85"/><path d="M42 9.5v3" transform="rotate(247.5 42 42)" stroke="#fff" stroke-width="1" opacity=".85"/><path d="M42 9.5v5" transform="rotate(255.0 42 42)" stroke="#fff" stroke-width="1" opacity=".85"/><path d="M42 9.5v3" transform="rotate(262.5 42 42)" stroke="#fff" stroke-width="1" opacity=".85"/><path d="M42 9.5v5" transform="rotate(270.0 42 42)" stroke="#fff" stroke-width="1" opacity=".85"/><path d="M42 9.5v3" transform="rotate(277.5 42 42)" stroke="#fff" stroke-width="1" opacity=".85"/><path d="M42 9.5v5" transform="rotate(285.0 42 42)" stroke="#fff" stroke-width="1" opacity=".85"/><path d="M42 9.5v3" transform="rotate(292.5 42 42)" stroke="#fff" stroke-width="1" opacity=".85"/><path d="M42 9.5v5" transform="rotate(300.0 42 42)" stroke="#fff" stroke-width="1" opacity=".85"/><path d="M42 9.5v3" transform="rotate(307.5 42 42)" stroke="#fff" stroke-width="1" opacity=".85"/><path d="M42 9.5v5" transform="rotate(315.0 42 42)" stroke="#fff" stroke-width="1" opacity=".85"/><path d="M42 9.5v3" transform="rotate(322.5 42 42)" stroke="#fff" stroke-width="1" opacity=".85"/><path d="M42 9.5v5" transform="rotate(330.0 42 42)" stroke="#fff" stroke-width="1" opacity=".85"/><path d="M42 9.5v3" transform="rotate(337.5 42 42)" stroke="#fff" stroke-width="1" opacity=".85"/><path d="M42 9.5v5" transform="rotate(345.0 42 42)" stroke="#fff" stroke-width="1" opacity=".85"/><path d="M42 9.5v3" transform="rotate(352.5 42 42)" stroke="#fff" stroke-width="1" opacity=".85"/><path d="M66 16L45.500 45.500 38.500 38.500z" fill="#f2453d"/><path d="M18 68L38.500 38.500l7 7z" fill="#f4f4f4"/></g></svg>
<svg style="left:356px;top:21px;" width="84" height="84" viewBox="0 0 84 84"><defs><clipPath id="ic820"><rect width="84" height="84" rx="19.500"/></clipPath><linearGradient id="mg" x1="0" y1="0" x2="0" y2="1"><stop offset="0" stop-color="#62f06e"/><stop offset="1" stop-color="#17c033"/></linearGradient><linearGradient id="mw" x1="0" y1="0" x2="0" y2="1"><stop offset="0" stop-color="#ffffff"/><stop offset="1" stop-color="#d9f2dc"/></linearGradient></defs><g clip-path="url(#ic820)"><rect width="84" height="84" fill="url(#mg)"/><ellipse cx="42" cy="39" rx="31" ry="25.500" fill="url(#mw)"/><path d="M22 56q-1 9-8 13 11 0 18-8z" fill="#e9f7ea"/></g></svg>
<svg style="left:468px;top:21px;" width="84" height="84" viewBox="0 0 84 84"><defs><clipPath id="ic932"><rect width="84" height="84" rx="19.500"/></clipPath><linearGradient id="ml" x1="0" y1="0" x2="0" y2="1"><stop offset="0" stop-color="#1e6ff2"/><stop offset="1" stop-color="#1ec6fb"/></linearGradient><linearGradient id="me" x1="0" y1="0" x2="0" y2="1"><stop offset="0" stop-color="#ffffff"/><stop offset="1" stop-color="#e3e4e9"/></linearGradient></defs><g clip-path="url(#ic932)"><rect width="84" height="84" fill="url(#ml)"/><rect x="12" y="23" width="60" height="39" rx="4.500" fill="url(#me)"/><path d="M13 25l29 22 29-22" fill="none" stroke="#b9bcc4" stroke-width="1.800"/><path d="M13 60l21-19M71 60L50 41" fill="none" stroke="#c5c8cf" stroke-width="1.500"/></g></svg>
<svg style="left:580px;top:21px;" width="84" height="84" viewBox="0 0 84 84"><defs><clipPath id="ic1044"><rect width="84" height="84" rx="19.500"/></clipPath></defs><g clip-path="url(#ic1044)"><rect width="84" height="84" fill="#fff"/><g style="mix-blend-mode:multiply"><rect x="31" y="4.500" width="22" height="38.500" rx="11" transform="rotate(0 42 42)" fill="#fa9f2a" opacity=".82" style="mix-blend-mode:multiply"/><rect x="31" y="4.500" width="22" height="38.500" rx="11" transform="rotate(45 42 42)" fill="#f6d72b" opacity=".82" style="mix-blend-mode:multiply"/><rect x="31" y="4.500" width="22" height="38.500" rx="11" transform="rotate(90 42 42)" fill="#a4d23c" opacity=".82" style="mix-blend-mode:multiply"/><rect x="31" y="4.500" width="22" height="38.500" rx="11" transform="rotate(135 42 42)" fill="#4ab96d" opacity=".82" style="mix-blend-mode:multiply"/><rect x="31" y="4.500" width="22" height="38.500" rx="11" transform="rotate(180 42 42)" fill="#3f95df" opacity=".82" style="mix-blend-mode:multiply"/><rect x="31" y="4.500" width="22" height="38.500" rx="11" transform="rotate(225 42 42)" fill="#6b72d8" opacity=".82" style="mix-blend-mode:multiply"/><rect x="31" y="4.500" width="22" height="38.500" rx="11" transform="rotate(270 42 42)" fill="#b76dc7" opacity=".82" style="mix-blend-mode:multiply"/><rect x="31" y="4.500" width="22" height="38.500" rx="11" transform="rotate(315 42 42)" fill="#f24f3a" opacity=".82" style="mix-blend-mode:multiply"/></g></g></svg>
<svg style="left:692px;top:21px;" width="84" height="84" viewBox="0 0 84 84"><defs><clipPath id="ic1156"><rect width="84" height="84" rx="19.500"/></clipPath><linearGradient id="nb" x1="0" y1="0" x2="0" y2="1"><stop offset="0" stop-color="#fbfaf7"/><stop offset="1" stop-color="#ebe8e1"/></linearGradient><linearGradient id="ny" x1="0" y1="0" x2="0" y2="1"><stop offset="0" stop-color="#fed22e"/><stop offset="1" stop-color="#fbc110"/></linearGradient></defs><g clip-path="url(#ic1156)"><rect width="84" height="84" fill="url(#nb)"/><rect width="84" height="21.500" fill="url(#ny)"/><path d="M0 22h84" stroke="#cda21c" stroke-width="1"/><path d="M1 25.500h82" stroke="#cfcac0" stroke-width="1.500" stroke-dasharray="1 1.600"/><path d="M0 42.5h84" stroke="#d9d6cf" stroke-width="1"/><path d="M0 62.5h84" stroke="#d9d6cf" stroke-width="1"/></g></svg>
<svg style="left:804px;top:21px;" width="84" height="84" viewBox="0 0 84 84"><defs><clipPath id="ic1268"><rect width="84" height="84" rx="19.500"/></clipPath><linearGradient id="mu" x1="0" y1="0" x2="0" y2="1"><stop offset="0" stop-color="#fc5d76"/><stop offset="1" stop-color="#fa2540"/></linearGradient></defs><g clip-path="url(#ic1268)"><rect width="84" height="84" fill="url(#mu)"/><path d="M32 60V25.500q0-3 3-3.700l23-5.300q3-.7 3 2.300V53" fill="none" stroke="#fff" stroke-width="5" stroke-linejoin="round"/><path d="M32 36l29-6.500V21l-29 6.500z" fill="#fff"/><ellipse cx="25.500" cy="61" rx="9" ry="7.300" transform="rotate(-18 25.500 61)" fill="#fff"/><ellipse cx="54.500" cy="54" rx="9" ry="7.300" transform="rotate(-18 54.500 54)" fill="#fff"/></g></svg>
<svg style="left:916px;top:21px;" width="84" height="84" viewBox="0 0 84 84"><defs><clipPath id="ic1380"><rect width="84" height="84" rx="19.500"/></clipPath><linearGradient id="as" x1="0" y1="0" x2="0" y2="1"><stop offset="0" stop-color="#1fb0f9"/><stop offset="1" stop-color="#1a62ea"/></linearGradient></defs><g clip-path="url(#ic1380)"><rect width="84" height="84" fill="url(#as)"/><g stroke="#fff" stroke-width="5.400" stroke-linecap="round" fill="none"><path d="M14.500 51.500h30M55.500 51.500h14"/><path d="M46.500 18L24.500 56M20 63.500l-2.500 4.500"/><path d="M37.500 18L64.500 65"/></g></g></svg>
<svg style="left:1028px;top:21px;" width="84" height="84" viewBox="0 0 84 84"><defs><clipPath id="ic1492"><rect width="84" height="84" rx="19.500"/></clipPath><linearGradient id="st" x1="0" y1="0" x2="0" y2="1"><stop offset="0" stop-color="#e3e7ea"/><stop offset=".5" stop-color="#b5b8bb"/><stop offset="1" stop-color="#8a8c8f"/></linearGradient></defs><g clip-path="url(#ic1492)"><rect width="84" height="84" fill="url(#st)"/><circle cx="42" cy="42" r="36.500" fill="#313234"/><rect x="40.700" y="6.800" width="2.600" height="5.200" transform="rotate(0.0 42 42)" fill="#8a8c8f"/><rect x="40.700" y="6.800" width="2.600" height="5.200" transform="rotate(7.5 42 42)" fill="#8a8c8f"/><rect x="40.700" y="6.800" width="2.600" height="5.200" transform="rotate(15.0 42 42)" fill="#8a8c8f"/><rect x="40.700" y="6.800" width="2.600" height="5.200" transform="rotate(22.5 42 42)" fill="#8a8c8f"/><rect x="40.700" y="6.800" width="2.600" height="5.200" transform="rotate(30.0 42 42)" fill="#8a8c8f"/><rect x="40.700" y="6.800" width="2.600" height="5.200" transform="rotate(37.5 42 42)" fill="#8a8c8f"/><rect x="40.700" y="6.800" width="2.600" height="5.200" transform="rotate(45.0 42 42)" fill="#8a8c8f"/><rect x="40.700" y="6.800" width="2.600" height="5.200" transform="rotate(52.5 42 42)" fill="#8a8c8f"/><rect x="40.700" y="6.800" width="2.600" height="5.200" transform="rotate(60.0 42 42)" fill="#8a8c8f"/><rect x="40.700" y="6.800" width="2.600" height="5.200" transform="rotate(67.5 42 42)" fill="#8a8c8f"/><rect x="40.700" y="6.800" width="2.600" height="5.200" transform="rotate(75.0 42 42)" fill="#8a8c8f"/><rect x="40.700" y="6.800" width="2.600" height="5.200" transform="rotate(82.5 42 42)" fill="#8a8c8f"/><rect x="40.700" y="6.800" width="2.600" height="5.200" transform="rotate(90.0 42 42)" fill="#8a8c8f"/><rect x="40.700" y="6.800" width="2.600" height="5.200" transform="rotate(97.5 42 42)" fill="#8a8c8f"/><rect x="40.700" y="6.800" width="2.600" height="5.200" transform="rotate(105.0 42 42)" fill="#8a8c8f"/><rect x="40.700" y="6.800" width="2.600" height="5.200" transform="rotate(112.5 42 42)" fill="#8a8c8f"/><rect x="40.700" y="6.800" width="2.600" height="5.200" transform="rotate(120.0 42 42)" fill="#8a8c8f"/><rect x="40.700" y="6.800" width="2.600" height="5.200" transform="rotate(127.5 42 42)" fill="#8a8c8f"/><rect x="40.700" y="6.800" width="2.600" height="5.200" transform="rotate(135.0 42 42)" fill="#8a8c8f"/><rect x="40.700" y="6.800" width="2.600" height="5.200" transform="rotate(142.5 42 42)" fill="#8a8c8f"/><rect x="40.700" y="6.800" width="2.600" height="5.200" transform="rotate(150.0 42 42)" fill="#8a8c8f"/><rect x="40.700" y="6.800" width="2.600" height="5.200" transform="rotate(157.5 42 42)" fill="#8a8c8f"/><rect x="40.700" y="6.800" width="2.600" height="5.200" transform="rotate(165.0 42 42)" fill="#8a8c8f"/><rect x="40.700" y="6.800" width="2.600" height="5.200" transform="rotate(172.5 42 42)" fill="#8a8c8f"/><rect x="40.700" y="6.800" width="2.600" height="5.200" transform="rotate(180.0 42 42)" fill="#8a8c8f"/><rect x="40.700" y="6.800" width="2.600" height="5.200" transform="rotate(187.5 42 42)" fill="#8a8c8f"/><rect x="40.700" y="6.800" width="2.600" height="5.200" transform="rotate(195.0 42 42)" fill="#8a8c8f"/><rect x="40.700" y="6.800" width="2.600" height="5.200" transform="rotate(202.5 42 42)" fill="#8a8c8f"/><rect x="40.700" y="6.800" width="2.600" height="5.200" transform="rotate(210.0 42 42)" fill="#8a8c8f"/><rect x="40.700" y="6.800" width="2.600" height="5.200" transform="rotate(217.5 42 42)" fill="#8a8c8f"/><rect x="40.700" y="6.800" width="2.600" height="5.200" transform="rotate(225.0 42 42)" fill="#8a8c8f"/><rect x="40.700" y="6.800" width="2.600" height="5.200" transform="rotate(232.5 42 42)" fill="#8a8c8f"/><rect x="40.700" y="6.800" width="2.600" height="5.200" transform="rotate(240.0 42 42)" fill="#8a8c8f"/><rect x="40.700" y="6.800" width="2.600" height="5.200" transform="rotate(247.5 42 42)" fill="#8a8c8f"/><rect x="40.700" y="6.800" width="2.600" height="5.200" transform="rotate(255.0 42 42)" fill="#8a8c8f"/><rect x="40.700" y="6.800" width="2.600" height="5.200" transform="rotate(262.5 42 42)" fill="#8a8c8f"/><rect x="40.700" y="6.800" width="2.600" height="5.200" transform="rotate(270.0 42 42)" fill="#8a8c8f"/><rect x="40.700" y="6.800" width="2.600" height="5.200" transform="rotate(277.5 42 42)" fill="#8a8c8f"/><rect x="40.700" y="6.800" width="2.600" height="5.200" transform="rotate(285.0 42 42)" fill="#8a8c8f"/><rect x="40.700" y="6.800" width="2.600" height="5.200" transform="rotate(292.5 42 42)" fill="#8a8c8f"/><rect x="40.700" y="6.800" width="2.600" height="5.200" transform="rotate(300.0 42 42)" fill="#8a8c8f"/><rect x="40.700" y="6.800" width="2.600" height="5.200" transform="rotate(307.5 42 42)" fill="#8a8c8f"/><rect x="40.700" y="6.800" width="2.600" height="5.200" transform="rotate(315.0 42 42)" fill="#8a8c8f"/><rect x="40.700" y="6.800" width="2.600" height="5.200" transform="rotate(322.5 42 42)" fill="#8a8c8f"/><rect x="40.700" y="6.800" width="2.600" height="5.200" transform="rotate(330.0 42 42)" fill="#8a8c8f"/><rect x="40.700" y="6.800" width="2.600" height="5.200" transform="rotate(337.5 42 42)" fill="#8a8c8f"/><rect x="40.700" y="6.800" width="2.600" height="5.200" transform="rotate(345.0 42 42)" fill="#8a8c8f"/><rect x="40.700" y="6.800" width="2.600" height="5.200" transform="rotate(352.5 42 42)" fill="#8a8c8f"/><circle cx="42" cy="42" r="29.800" fill="#7d7f82"/><circle cx="42" cy="42" r="26.600" fill="#3b3c3f"/><circle cx="42" cy="42" r="24.200" fill="#77797c"/><circle cx="42" cy="42" r="20" fill="#55575a"/><path d="M42.0 42.0L24.3 24.3M42.0 42.0L66.6 46.3M42.0 42.0L30.7 64.3" stroke="#939598" stroke-width="4.400" stroke-linecap="butt"/><circle cx="42" cy="42" r="22" fill="none" stroke="#939598" stroke-width="3.600"/><circle cx="42" cy="42" r="2.200" fill="#4a4b4e"/></g></svg>
<svg style="left:1140px;top:21px;" width="84" height="84" viewBox="0 0 84 84"><defs><clipPath id="ic1604"><rect width="84" height="84" rx="19.500"/></clipPath></defs><g clip-path="url(#ic1604)"><rect width="84" height="84" fill="#f1455c"/><circle cx="72.3" cy="42.0" r="7.200" fill="#fdf6e8"/><circle cx="70.0" cy="53.6" r="7.200" fill="#fdf6e8"/><circle cx="63.4" cy="63.4" r="7.200" fill="#fdf6e8"/><circle cx="53.6" cy="70.0" r="7.200" fill="#fdf6e8"/><circle cx="42.0" cy="72.3" r="7.200" fill="#fdf6e8"/><circle cx="30.4" cy="70.0" r="7.200" fill="#fdf6e8"/><circle cx="20.6" cy="63.4" r="7.200" fill="#fdf6e8"/><circle cx="14.0" cy="53.6" r="7.200" fill="#fdf6e8"/><circle cx="11.7" cy="42.0" r="7.200" fill="#fdf6e8"/><circle cx="14.0" cy="30.4" r="7.200" fill="#fdf6e8"/><circle cx="20.6" cy="20.6" r="7.200" fill="#fdf6e8"/><circle cx="30.4" cy="14.0" r="7.200" fill="#fdf6e8"/><circle cx="42.0" cy="11.7" r="7.200" fill="#fdf6e8"/><circle cx="53.6" cy="14.0" r="7.200" fill="#fdf6e8"/><circle cx="63.4" cy="20.6" r="7.200" fill="#fdf6e8"/><circle cx="70.0" cy="30.4" r="7.200" fill="#fdf6e8"/><circle cx="42" cy="42" r="31.500" fill="#fdf6e8"/><circle cx="42" cy="42.300" r="21.700" fill="#ef4259"/><ellipse cx="31.800" cy="36.200" rx="2.500" ry="4.200" fill="#fdf6e8"/><ellipse cx="50.400" cy="36.200" rx="2.500" ry="4.200" fill="#fdf6e8"/><path d="M32.500 47h17q-.700 11.500-8.500 11.500t-8.500-11.500z" fill="#fdf6e8"/></g></svg>
<svg style="left:1252px;top:21px;" width="90" height="90" viewBox="0 0 90 90"><defs><clipPath id="pvc"><rect x="5.500" y="5.500" width="73" height="73" rx="14"/></clipPath><linearGradient id="pvs" x1="0" y1="0" x2="0" y2="1"><stop offset="0" stop-color="#8aa7dd"/><stop offset="1" stop-color="#b3c7ea"/></linearGradient><linearGradient id="pvg" x1="0" y1="0" x2="1" y2="0"><stop offset="0" stop-color="#8d9197" stop-opacity=".85"/><stop offset=".3" stop-color="#f3f5f7" stop-opacity=".9"/><stop offset=".7" stop-color="#dfe3e7" stop-opacity=".9"/><stop offset="1" stop-color="#6d7177" stop-opacity=".9"/></linearGradient></defs><rect width="84" height="84" rx="19.500" fill="#eff1f4"/><g clip-path="url(#pvc)"><rect x="5" y="5" width="74" height="41" fill="url(#pvs)"/><rect x="5" y="45" width="74" height="12" fill="#26488c"/><rect x="5" y="54" width="74" height="25" fill="#9db4cf"/><path d="M5 58q12-4 22 0t20-2 32 1v22H5z" fill="#e4ecf3"/><path d="M5 56q8-3 13 1t12 3H5zM12 74q10-5 22-1l6 5H8z" fill="#5d5f63"/></g><path d="M52 56l-9.500 24q-1.500 5.500 5 6.500 17 2 34 0 6.500-1 5-6.500L77 56z" fill="url(#pvg)"/><ellipse cx="64.500" cy="82" rx="17" ry="3.600" fill="#f4f6f8" opacity=".8"/><path d="M46 45v9q0 4.500 18.500 4.500T83 54v-9z" fill="#1b1b1e"/><ellipse cx="64.500" cy="45" rx="18.500" ry="5" fill="#3c3c40"/><ellipse cx="64.500" cy="44.600" rx="14" ry="3.200" fill="#232326"/></svg>
<div style="left:1376.2px;top:19px;width:1.4px;height:96px;background:rgba(60,50,70,.38)"></div>
<svg style="left:1424.5px;top:22.8px;" width="68" height="88" viewBox="0 0 68 88"><path d="M0 0h44l24 24v64H0z" fill="#fdfdfd"/><path d="M44 0l24 24H44z" fill="#d9d9dc"/><path d="M0 0h44l24 24v64H0z" fill="none" stroke="#d0d0d3" stroke-width=".8"/><rect x="15" y="31" width="38" height="42" rx="3" fill="url(#dk)"/><ellipse cx="34" cy="48" rx="13" ry="11" fill="#9da4ad" stroke="#6d737b" stroke-width="1"/><circle cx="34" cy="48" r="2.500" fill="#d5d9de"/><rect x="15" y="63" width="38" height="10" fill="#4b4f55"/><path d="M19 66v5M23 66v5M27 66v5M31 66v5M35 66v5M39 66v5M43 66v5M47 66v5" stroke="#a4a9b0" stroke-width="1.400"/><defs><linearGradient id="dk" x1="0" y1="0" x2="0" y2="1"><stop offset="0" stop-color="#c4c9d0"/><stop offset="1" stop-color="#7d848d"/></linearGradient></defs></svg>
<svg style="left:1532px;top:16.5px;" width="76" height="94" viewBox="0 0 76 94"><defs><linearGradient id="tr" x1="0" y1="0" x2="1" y2="0"><stop offset="0" stop-color="#e6e6e9"/><stop offset=".35" stop-color="#fafafb"/><stop offset=".7" stop-color="#f1f1f3"/><stop offset="1" stop-color="#d9d9dd"/></linearGradient></defs><path d="M1.500 9l10 74q1 9 12 9h29q11 0 12-9l10-74z" fill="url(#tr)"/><ellipse cx="38" cy="9.500" rx="36.800" ry="8.500" fill="#e3e3e7" stroke="#f7f7f9" stroke-width="2.200"/></svg>
<div style="left:58.5px;top:123.3px;width:7px;height:7px;border-radius:50%;background:#140d1c"></div>
<div style="left:1178.5px;top:123.3px;width:7px;height:7px;border-radius:50%;background:#4b4654"></div>
<div style="left:1290.5px;top:123.3px;width:7px;height:7px;border-radius:50%;background:#4b4654"></div></div>
</body></html>
